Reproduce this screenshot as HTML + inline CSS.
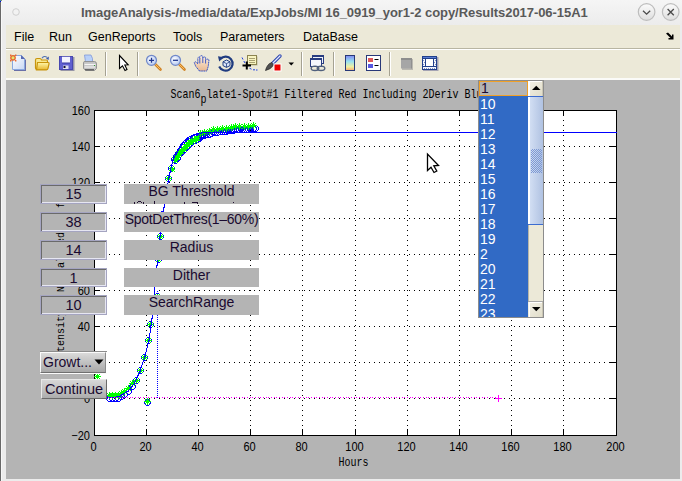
<!DOCTYPE html><html><head><meta charset="utf-8"><style>
html,body{margin:0;padding:0;width:682px;height:481px;overflow:hidden;background:#ececec;}
body{position:relative;font-family:"Liberation Sans",sans-serif;}
.abs{position:absolute;}
#lb{left:0;top:0;width:1px;height:481px;background:#686868;box-shadow:1px 0 0 #f8f8f8;}
#title{left:1px;top:0;width:681px;height:25px;background:linear-gradient(#f5f5f5,#ececec);}
#ttext{left:80px;top:5px;font-size:13px;letter-spacing:-0.055px;font-weight:bold;color:#595959;white-space:nowrap;}
#menu{left:6px;top:25px;width:674px;height:23px;background:#ece9d8;border-bottom:1px solid #b8b5a2;}
#menuw{left:6px;top:49px;width:674px;height:1px;background:#fff;}
.mi{position:absolute;top:5px;font-size:12.5px;color:#000;white-space:nowrap;}
#tool{left:6px;top:50px;width:674px;height:28px;background:#ece9d8;}
#toolw{left:6px;top:78px;width:674px;height:2px;background:#fbfbf8;}
#fig{left:6px;top:80px;width:674px;height:399px;background:#b4b4b4;}
.sep{position:absolute;top:52px;width:1px;height:24px;background:#a5a292;box-shadow:1px 0 0 #fff;}
.ed{position:absolute;box-sizing:border-box;width:67px;height:20px;border:1px solid #a4a4c0;box-shadow:inset 1px 1px 0 #6a6a6a,inset -1px -1px 0 #e6e6f2;text-align:center;font-size:14.5px;line-height:18px;color:#1a0a30;background:#b4b4b4;}
.lab{position:absolute;box-sizing:border-box;width:135px;height:20px;background:#b4b4b4;text-align:center;font-size:14px;line-height:15px;color:#1a0a30;overflow:hidden;white-space:nowrap;}
.tk{position:absolute;font-family:"Liberation Mono",monospace;font-size:10px;line-height:10px;color:#000;white-space:nowrap;transform-origin:0 0;}
.nm{position:absolute;font-family:"Liberation Sans",sans-serif;font-size:11px;line-height:10px;color:#000;white-space:nowrap;transform-origin:0 0;text-align:right;}
</style></head><body>
<div class="abs" id="title">
<svg class="abs" style="left:-1px;top:0" width="682" height="25">
<defs><linearGradient id="bg1" x1="0" y1="0" x2="0" y2="1"><stop offset="0" stop-color="#fbfbfb"/><stop offset="1" stop-color="#dedede"/></linearGradient></defs>
<circle cx="16" cy="12" r="3.3" fill="#f2f2f2" stroke="#d0d0d0" stroke-width="1"/>
<circle cx="646.6" cy="12" r="8.3" fill="url(#bg1)" stroke="#bdbdbd" stroke-width="1.2"/>
<circle cx="670.7" cy="12" r="8.3" fill="url(#bg1)" stroke="#bdbdbd" stroke-width="1.2"/>
<path d="M643 10.8 L646.6 14.2 L650.2 10.8" fill="none" stroke="#4a4a4a" stroke-width="1.3"/>
<path d="M667.6 9 L673.8 15.2 M673.8 9 L667.6 15.2" fill="none" stroke="#4a4a4a" stroke-width="1.3"/>
</svg>
<div class="abs" id="ttext">ImageAnalysis-/media/data/ExpJobs/MI 16_0919_yor1-2 copy/Results2017-06-15A1</div>
</div>
<div class="abs" id="lb"></div><div class="abs" style="left:0;top:0;width:1px;height:1px;background:#40a0a0"></div><div class="abs" style="left:0;top:1px;width:1px;height:1px;background:#0000e0"></div><div class="abs" style="left:1px;top:0;width:1px;height:1px;background:#808080"></div>
<div class="abs" id="menu">
<span class="mi" style="left:8px">File</span>
<span class="mi" style="left:43px">Run</span>
<span class="mi" style="left:82px">GenReports</span>
<span class="mi" style="left:167px">Tools</span>
<span class="mi" style="left:214px">Parameters</span>
<span class="mi" style="left:297px">DataBase</span>
<svg class="abs" style="left:659px;top:7px" width="10" height="9"><path d="M1 1.5 L3 0.5 L7 4.5 L7 2.5 L8.5 2.5 L8.5 7.5 L3.5 7.5 L3.5 6 L5.5 6 L1.5 2 Z" fill="#000"/></svg>
</div>
<div class="abs" id="menuw"></div>
<div class="abs" id="tool"></div>
<div class="abs" id="toolw"></div>
<div class="abs" id="fig"></div>

<div class="sep" style="left:105px"></div>
<div class="sep" style="left:137px"></div>
<div class="sep" style="left:301px"></div>
<div class="sep" style="left:333px"></div>
<div class="sep" style="left:389px"></div>
<svg class="abs" style="left:0;top:0" width="682" height="80">
<defs>
<linearGradient id="gdoc" x1="0" y1="0" x2="1" y2="1"><stop offset="0" stop-color="#ffffff"/><stop offset="1" stop-color="#c8d8f4"/></linearGradient>
<linearGradient id="gfold" x1="0" y1="0" x2="0" y2="1"><stop offset="0" stop-color="#fff6a8"/><stop offset="1" stop-color="#e8b830"/></linearGradient>
<linearGradient id="gcb" x1="0" y1="0" x2="0" y2="1"><stop offset="0" stop-color="#8088f0"/><stop offset="0.4" stop-color="#98e0f0"/><stop offset="0.75" stop-color="#f0f0a0"/><stop offset="1" stop-color="#f8a870"/></linearGradient>
<radialGradient id="glens" cx="0.4" cy="0.4" r="0.7"><stop offset="0" stop-color="#ffffff"/><stop offset="1" stop-color="#a8c0f0"/></radialGradient>
</defs>
<!-- new -->
<path d="M14 69 H26 V60 L24 58 V69 Z" fill="#6a70a8"/>
<rect x="14" y="69" width="12" height="2" fill="#6a70a8"/>
<path d="M12.5 55.5 H21.5 L24.5 58.5 V69.5 H12.5 Z" fill="url(#gdoc)" stroke="#88a8e0" stroke-width="1"/>
<path d="M21 55 L25 59 H21 Z" fill="#5868b0"/>
<circle cx="13" cy="57.8" r="2.2" fill="#e0e870" stroke="#e86a30" stroke-width="1.4"/>
<path d="M10 54.5h1.4v1.4h-1.4zM15 54.5h1.4v1.4h-1.4zM10 60h1.4v1.4h-1.4zM15 60h1.4v1.4h-1.4z" fill="#e86a30"/>
<!-- open -->
<path d="M35.5 60 Q35.5 58.5 37 58.5 H40 Q41 58.5 41.5 60 H46.5 Q47.5 60 47.5 61.5 V68 Q47.5 69.5 46 69.5 H37 Q35.5 69.5 35.5 68 Z" fill="#f8e890" stroke="#c8940c" stroke-width="1.2"/>
<path d="M37.5 62.5 H48.2 Q49.2 62.5 49 63.8 L48 68.5 Q47.8 69.8 46.5 69.8 H36.5 Z" fill="url(#gfold)" stroke="#c8940c" stroke-width="1.2"/>
<path d="M42 58.2 Q44 55.2 47.2 57.4" fill="none" stroke="#5070b0" stroke-width="1.1"/>
<path d="M46 58.6 L48.9 56.6 L48.6 60 Z" fill="#3858a8"/>
<!-- save -->
<rect x="60.5" y="57" width="14" height="14" fill="#505080" opacity="0.55"/>
<rect x="59" y="56" width="14" height="14" fill="#6060d0"/>
<rect x="59.5" y="56.5" width="13" height="13" fill="none" stroke="#4848b0" stroke-width="1"/>
<rect x="62" y="56.8" width="8" height="6.2" fill="#f4f4ff"/>
<rect x="62" y="62.5" width="8" height="1" fill="#3838a0"/>
<rect x="63" y="65.5" width="5.5" height="3.5" fill="#e0e0f0"/>
<rect x="63.5" y="66" width="2" height="2" fill="#101030"/>
<!-- print -->
<path d="M84.5 55 H91 L92.5 58.5 V62 H85.5 Z" fill="#b8d0f8" stroke="#8098d8" stroke-width="0.8"/>
<path d="M83.5 62.5 Q83.5 61.5 85 61.5 H94.5 Q96.5 61.5 96.5 64 V68.5 L94.5 70.5 H86 L83.5 68.5 Z" fill="#c4c4c4" stroke="#8c8c8c" stroke-width="0.9"/>
<path d="M84.5 64.5 H95.5" stroke="#f4f4f4" stroke-width="1.2"/>
<path d="M84.5 67 H95" stroke="#f8f8f8" stroke-width="1"/>
<path d="M85 69.8 H94" stroke="#505050" stroke-width="1.2"/>
<rect x="94" y="65" width="1" height="1" fill="#30a030"/>
<!-- arrow -->
<path d="M119.5 55.5 V68.5 L122.5 65.8 L125 70.5 L127 69.5 L124.8 65 L128.2 64.8 Z" fill="#fff" stroke="#000" stroke-width="1.1" stroke-linejoin="miter"/>
<!-- zoom in -->
<line x1="155.5" y1="64.5" x2="160.5" y2="69.5" stroke="#d08020" stroke-width="2.6" stroke-linecap="round"/>
<line x1="155.5" y1="64.5" x2="160" y2="69" stroke="#f8c060" stroke-width="1" stroke-linecap="round"/>
<circle cx="151.5" cy="60.3" r="5" fill="url(#glens)" stroke="#7088c8" stroke-width="1.2"/>
<path d="M149 60.3 H154 M151.5 57.8 V62.8" stroke="#203890" stroke-width="1.3"/>
<!-- zoom out -->
<line x1="179.5" y1="64.5" x2="184.5" y2="69.5" stroke="#d08020" stroke-width="2.6" stroke-linecap="round"/>
<line x1="179.5" y1="64.5" x2="184" y2="69" stroke="#f8c060" stroke-width="1" stroke-linecap="round"/>
<circle cx="175.5" cy="60.3" r="5" fill="url(#glens)" stroke="#7088c8" stroke-width="1.2"/>
<path d="M173 60.3 H178" stroke="#203890" stroke-width="1.3"/>
<!-- hand -->
<defs><linearGradient id="ghand" x1="0" y1="0" x2="0" y2="1"><stop offset="0" stop-color="#fdf0e0"/><stop offset="1" stop-color="#e8b890"/></linearGradient></defs>
<path d="M199.5 71 L195.8 66.5 L194.3 62.8 Q194.6 61.3 196 62 L197.8 63.8 V58.2 Q198 56.8 199.3 57.5 L199.8 58.3 V56.4 Q201.5 55 202.8 56.3 V58 Q204.3 56.3 205.6 57.4 V60 Q207.5 58.4 209 59.8 L208.2 66.5 L206.8 71 Z" fill="url(#ghand)" stroke="#3050c8" stroke-width="1" stroke-dasharray="1.6 0.6"/>
<path d="M199.8 58.3 V63.5 M202.8 58 V63 M205.6 60 V63.5" stroke="#3050c8" stroke-width="0.9"/>
<!-- rotate -->
<path d="M220.5 58.8 A7 7 0 1 1 219.2 66.5" fill="none" stroke="#203c80" stroke-width="2.2"/>
<path d="M218 56.2 L223.8 57.2 L219.2 61.6 Z" fill="#203c80"/>
<path d="M226.5 60 L230 61.8 V65.6 L226.5 67.4 L223 65.6 V61.8 Z" fill="#dce6f8" stroke="#203c80" stroke-width="1"/>
<path d="M223 61.8 L226.5 63.6 L230 61.8 M226.5 63.6 V67.4" fill="none" stroke="#203c80" stroke-width="0.8"/>
<!-- datacursor -->
<rect x="248.5" y="56.5" width="9" height="9" fill="#909060" opacity="0.5"/>
<rect x="247.5" y="55.5" width="9" height="9" fill="#f8f4c0" stroke="#8c8450" stroke-width="1"/>
<path d="M249 58.5 H255 M249 60.5 H255 M249 62.5 H255" stroke="#a8a070" stroke-width="1"/>
<path d="M242 57.5 L243 59.5 M243.8 61 L245 63" fill="none" stroke="#2040e0" stroke-width="1"/>
<path d="M249.5 68.2 L251.5 69.2 M253 69.8 H255 M256 70 H257.5" fill="none" stroke="#2040e0" stroke-width="1"/>
<path d="M242.5 65.5 H251 M246.8 61.5 V69.5" stroke="#000" stroke-width="2"/>
<!-- brush -->
<path d="M280 56 L272.5 63.5" stroke="#3048b0" stroke-width="3.4" stroke-linecap="round"/>
<path d="M280 56 L272.5 63.5" stroke="#e0e8ff" stroke-width="1.2" stroke-linecap="round"/>
<path d="M271.8 62.5 Q267 64 265.5 70.5 Q270.5 69.5 273.5 65.2 Z" fill="#505050" stroke="#282828" stroke-width="0.7"/>
<rect x="273.5" y="63.5" width="8" height="8" fill="#fff"/>
<rect x="274.5" y="64.5" width="6" height="6" fill="#ee0000"/>
<path d="M288.5 62.5 H294 L291.25 65.5 Z" fill="#000"/>
<!-- link -->
<rect x="312.5" y="55.5" width="11" height="8" fill="#eef2fa" stroke="#283c80" stroke-width="1"/>
<rect x="312" y="55" width="12" height="2" fill="#283c80"/>
<rect x="310.5" y="58.5" width="11" height="8" fill="#f4f6fc" stroke="#283c80" stroke-width="1"/>
<rect x="310" y="58" width="12" height="2" fill="#283c80"/>
<ellipse cx="315" cy="68.3" rx="3.8" ry="2.2" fill="none" stroke="#50607c" stroke-width="1.4"/>
<ellipse cx="321" cy="68.3" rx="3.8" ry="2.2" fill="none" stroke="#50607c" stroke-width="1.4"/>
<!-- colorbar -->
<rect x="345.5" y="55.5" width="9" height="15" fill="url(#gcb)" stroke="#283878" stroke-width="1"/>
<!-- legend -->
<rect x="366.5" y="55.5" width="14" height="15" fill="#fff" stroke="#283878" stroke-width="1"/>
<rect x="368" y="58" width="5" height="4" fill="#e05858"/>
<rect x="368" y="64" width="5" height="4" fill="#5858e0"/>
<path d="M374.5 59.5 H378.5 M374.5 65.5 H378.5" stroke="#000" stroke-width="1"/>
<!-- grey square -->
<rect x="402" y="59" width="11" height="11" fill="#8c8c8c" opacity="0.5"/>
<rect x="401" y="58" width="11" height="10.5" fill="#a6a6a6"/>
<rect x="401" y="58" width="11" height="2" fill="#8e8e8e"/>
<rect x="411" y="58" width="1" height="10.5" fill="#909090"/>
<!-- plot tools -->
<rect x="423" y="57" width="15.5" height="14" fill="#50508a" opacity="0.45"/>
<rect x="422" y="56" width="15" height="14" fill="#22408c"/>
<rect x="423" y="57" width="13" height="1" fill="#5a7cd0"/>
<rect x="426" y="59" width="7" height="7" fill="#fff"/>
<rect x="423" y="59" width="2" height="7" fill="#f4f6fc"/>
<rect x="434" y="59" width="2" height="7" fill="#f4f6fc"/>
<rect x="423" y="67" width="13" height="2" fill="#f4f6fc"/>
<path d="M423 60h1v1h-1zM424 62h1v1h-1zM423 64h1v1h-1zM435 60h1v1h-1zM434 62h1v1h-1zM435 64h1v1h-1zM424 68h1v1h-1zM426 68h1v1h-1zM428 68h1v1h-1zM430 68h1v1h-1zM432 68h1v1h-1zM434 68h1v1h-1z" fill="#8090c0"/>
</svg>

<svg class="abs" style="left:0;top:0" width="682" height="481">
<rect x="94" y="110" width="522" height="325" fill="#fff"/>
<path d="M146 115h1v1h-1zM146 120h1v1h-1zM146 125h1v1h-1zM146 130h1v1h-1zM146 135h1v1h-1zM146 140h1v1h-1zM146 145h1v1h-1zM146 150h1v1h-1zM146 155h1v1h-1zM146 160h1v1h-1zM146 165h1v1h-1zM146 170h1v1h-1zM146 175h1v1h-1zM146 180h1v1h-1zM146 185h1v1h-1zM146 190h1v1h-1zM146 195h1v1h-1zM146 200h1v1h-1zM146 205h1v1h-1zM146 210h1v1h-1zM146 215h1v1h-1zM146 220h1v1h-1zM146 225h1v1h-1zM146 230h1v1h-1zM146 235h1v1h-1zM146 240h1v1h-1zM146 245h1v1h-1zM146 250h1v1h-1zM146 255h1v1h-1zM146 260h1v1h-1zM146 265h1v1h-1zM146 270h1v1h-1zM146 275h1v1h-1zM146 280h1v1h-1zM146 285h1v1h-1zM146 290h1v1h-1zM146 295h1v1h-1zM146 300h1v1h-1zM146 305h1v1h-1zM146 310h1v1h-1zM146 315h1v1h-1zM146 320h1v1h-1zM146 325h1v1h-1zM146 330h1v1h-1zM146 335h1v1h-1zM146 340h1v1h-1zM146 345h1v1h-1zM146 350h1v1h-1zM146 355h1v1h-1zM146 360h1v1h-1zM146 365h1v1h-1zM146 370h1v1h-1zM146 375h1v1h-1zM146 380h1v1h-1zM146 385h1v1h-1zM146 390h1v1h-1zM146 395h1v1h-1zM146 400h1v1h-1zM146 405h1v1h-1zM146 410h1v1h-1zM146 415h1v1h-1zM146 420h1v1h-1zM146 425h1v1h-1zM146 430h1v1h-1z" fill="#000"/>
<path d="M198 115h1v1h-1zM198 120h1v1h-1zM198 125h1v1h-1zM198 130h1v1h-1zM198 135h1v1h-1zM198 140h1v1h-1zM198 145h1v1h-1zM198 150h1v1h-1zM198 155h1v1h-1zM198 160h1v1h-1zM198 165h1v1h-1zM198 170h1v1h-1zM198 175h1v1h-1zM198 180h1v1h-1zM198 185h1v1h-1zM198 190h1v1h-1zM198 195h1v1h-1zM198 200h1v1h-1zM198 205h1v1h-1zM198 210h1v1h-1zM198 215h1v1h-1zM198 220h1v1h-1zM198 225h1v1h-1zM198 230h1v1h-1zM198 235h1v1h-1zM198 240h1v1h-1zM198 245h1v1h-1zM198 250h1v1h-1zM198 255h1v1h-1zM198 260h1v1h-1zM198 265h1v1h-1zM198 270h1v1h-1zM198 275h1v1h-1zM198 280h1v1h-1zM198 285h1v1h-1zM198 290h1v1h-1zM198 295h1v1h-1zM198 300h1v1h-1zM198 305h1v1h-1zM198 310h1v1h-1zM198 315h1v1h-1zM198 320h1v1h-1zM198 325h1v1h-1zM198 330h1v1h-1zM198 335h1v1h-1zM198 340h1v1h-1zM198 345h1v1h-1zM198 350h1v1h-1zM198 355h1v1h-1zM198 360h1v1h-1zM198 365h1v1h-1zM198 370h1v1h-1zM198 375h1v1h-1zM198 380h1v1h-1zM198 385h1v1h-1zM198 390h1v1h-1zM198 395h1v1h-1zM198 400h1v1h-1zM198 405h1v1h-1zM198 410h1v1h-1zM198 415h1v1h-1zM198 420h1v1h-1zM198 425h1v1h-1zM198 430h1v1h-1z" fill="#000"/>
<path d="M250 115h1v1h-1zM250 120h1v1h-1zM250 125h1v1h-1zM250 130h1v1h-1zM250 135h1v1h-1zM250 140h1v1h-1zM250 145h1v1h-1zM250 150h1v1h-1zM250 155h1v1h-1zM250 160h1v1h-1zM250 165h1v1h-1zM250 170h1v1h-1zM250 175h1v1h-1zM250 180h1v1h-1zM250 185h1v1h-1zM250 190h1v1h-1zM250 195h1v1h-1zM250 200h1v1h-1zM250 205h1v1h-1zM250 210h1v1h-1zM250 215h1v1h-1zM250 220h1v1h-1zM250 225h1v1h-1zM250 230h1v1h-1zM250 235h1v1h-1zM250 240h1v1h-1zM250 245h1v1h-1zM250 250h1v1h-1zM250 255h1v1h-1zM250 260h1v1h-1zM250 265h1v1h-1zM250 270h1v1h-1zM250 275h1v1h-1zM250 280h1v1h-1zM250 285h1v1h-1zM250 290h1v1h-1zM250 295h1v1h-1zM250 300h1v1h-1zM250 305h1v1h-1zM250 310h1v1h-1zM250 315h1v1h-1zM250 320h1v1h-1zM250 325h1v1h-1zM250 330h1v1h-1zM250 335h1v1h-1zM250 340h1v1h-1zM250 345h1v1h-1zM250 350h1v1h-1zM250 355h1v1h-1zM250 360h1v1h-1zM250 365h1v1h-1zM250 370h1v1h-1zM250 375h1v1h-1zM250 380h1v1h-1zM250 385h1v1h-1zM250 390h1v1h-1zM250 395h1v1h-1zM250 400h1v1h-1zM250 405h1v1h-1zM250 410h1v1h-1zM250 415h1v1h-1zM250 420h1v1h-1zM250 425h1v1h-1zM250 430h1v1h-1z" fill="#000"/>
<path d="M302 115h1v1h-1zM302 120h1v1h-1zM302 125h1v1h-1zM302 130h1v1h-1zM302 135h1v1h-1zM302 140h1v1h-1zM302 145h1v1h-1zM302 150h1v1h-1zM302 155h1v1h-1zM302 160h1v1h-1zM302 165h1v1h-1zM302 170h1v1h-1zM302 175h1v1h-1zM302 180h1v1h-1zM302 185h1v1h-1zM302 190h1v1h-1zM302 195h1v1h-1zM302 200h1v1h-1zM302 205h1v1h-1zM302 210h1v1h-1zM302 215h1v1h-1zM302 220h1v1h-1zM302 225h1v1h-1zM302 230h1v1h-1zM302 235h1v1h-1zM302 240h1v1h-1zM302 245h1v1h-1zM302 250h1v1h-1zM302 255h1v1h-1zM302 260h1v1h-1zM302 265h1v1h-1zM302 270h1v1h-1zM302 275h1v1h-1zM302 280h1v1h-1zM302 285h1v1h-1zM302 290h1v1h-1zM302 295h1v1h-1zM302 300h1v1h-1zM302 305h1v1h-1zM302 310h1v1h-1zM302 315h1v1h-1zM302 320h1v1h-1zM302 325h1v1h-1zM302 330h1v1h-1zM302 335h1v1h-1zM302 340h1v1h-1zM302 345h1v1h-1zM302 350h1v1h-1zM302 355h1v1h-1zM302 360h1v1h-1zM302 365h1v1h-1zM302 370h1v1h-1zM302 375h1v1h-1zM302 380h1v1h-1zM302 385h1v1h-1zM302 390h1v1h-1zM302 395h1v1h-1zM302 400h1v1h-1zM302 405h1v1h-1zM302 410h1v1h-1zM302 415h1v1h-1zM302 420h1v1h-1zM302 425h1v1h-1zM302 430h1v1h-1z" fill="#000"/>
<path d="M355 115h1v1h-1zM355 120h1v1h-1zM355 125h1v1h-1zM355 130h1v1h-1zM355 135h1v1h-1zM355 140h1v1h-1zM355 145h1v1h-1zM355 150h1v1h-1zM355 155h1v1h-1zM355 160h1v1h-1zM355 165h1v1h-1zM355 170h1v1h-1zM355 175h1v1h-1zM355 180h1v1h-1zM355 185h1v1h-1zM355 190h1v1h-1zM355 195h1v1h-1zM355 200h1v1h-1zM355 205h1v1h-1zM355 210h1v1h-1zM355 215h1v1h-1zM355 220h1v1h-1zM355 225h1v1h-1zM355 230h1v1h-1zM355 235h1v1h-1zM355 240h1v1h-1zM355 245h1v1h-1zM355 250h1v1h-1zM355 255h1v1h-1zM355 260h1v1h-1zM355 265h1v1h-1zM355 270h1v1h-1zM355 275h1v1h-1zM355 280h1v1h-1zM355 285h1v1h-1zM355 290h1v1h-1zM355 295h1v1h-1zM355 300h1v1h-1zM355 305h1v1h-1zM355 310h1v1h-1zM355 315h1v1h-1zM355 320h1v1h-1zM355 325h1v1h-1zM355 330h1v1h-1zM355 335h1v1h-1zM355 340h1v1h-1zM355 345h1v1h-1zM355 350h1v1h-1zM355 355h1v1h-1zM355 360h1v1h-1zM355 365h1v1h-1zM355 370h1v1h-1zM355 375h1v1h-1zM355 380h1v1h-1zM355 385h1v1h-1zM355 390h1v1h-1zM355 395h1v1h-1zM355 400h1v1h-1zM355 405h1v1h-1zM355 410h1v1h-1zM355 415h1v1h-1zM355 420h1v1h-1zM355 425h1v1h-1zM355 430h1v1h-1z" fill="#000"/>
<path d="M407 115h1v1h-1zM407 120h1v1h-1zM407 125h1v1h-1zM407 130h1v1h-1zM407 135h1v1h-1zM407 140h1v1h-1zM407 145h1v1h-1zM407 150h1v1h-1zM407 155h1v1h-1zM407 160h1v1h-1zM407 165h1v1h-1zM407 170h1v1h-1zM407 175h1v1h-1zM407 180h1v1h-1zM407 185h1v1h-1zM407 190h1v1h-1zM407 195h1v1h-1zM407 200h1v1h-1zM407 205h1v1h-1zM407 210h1v1h-1zM407 215h1v1h-1zM407 220h1v1h-1zM407 225h1v1h-1zM407 230h1v1h-1zM407 235h1v1h-1zM407 240h1v1h-1zM407 245h1v1h-1zM407 250h1v1h-1zM407 255h1v1h-1zM407 260h1v1h-1zM407 265h1v1h-1zM407 270h1v1h-1zM407 275h1v1h-1zM407 280h1v1h-1zM407 285h1v1h-1zM407 290h1v1h-1zM407 295h1v1h-1zM407 300h1v1h-1zM407 305h1v1h-1zM407 310h1v1h-1zM407 315h1v1h-1zM407 320h1v1h-1zM407 325h1v1h-1zM407 330h1v1h-1zM407 335h1v1h-1zM407 340h1v1h-1zM407 345h1v1h-1zM407 350h1v1h-1zM407 355h1v1h-1zM407 360h1v1h-1zM407 365h1v1h-1zM407 370h1v1h-1zM407 375h1v1h-1zM407 380h1v1h-1zM407 385h1v1h-1zM407 390h1v1h-1zM407 395h1v1h-1zM407 400h1v1h-1zM407 405h1v1h-1zM407 410h1v1h-1zM407 415h1v1h-1zM407 420h1v1h-1zM407 425h1v1h-1zM407 430h1v1h-1z" fill="#000"/>
<path d="M459 115h1v1h-1zM459 120h1v1h-1zM459 125h1v1h-1zM459 130h1v1h-1zM459 135h1v1h-1zM459 140h1v1h-1zM459 145h1v1h-1zM459 150h1v1h-1zM459 155h1v1h-1zM459 160h1v1h-1zM459 165h1v1h-1zM459 170h1v1h-1zM459 175h1v1h-1zM459 180h1v1h-1zM459 185h1v1h-1zM459 190h1v1h-1zM459 195h1v1h-1zM459 200h1v1h-1zM459 205h1v1h-1zM459 210h1v1h-1zM459 215h1v1h-1zM459 220h1v1h-1zM459 225h1v1h-1zM459 230h1v1h-1zM459 235h1v1h-1zM459 240h1v1h-1zM459 245h1v1h-1zM459 250h1v1h-1zM459 255h1v1h-1zM459 260h1v1h-1zM459 265h1v1h-1zM459 270h1v1h-1zM459 275h1v1h-1zM459 280h1v1h-1zM459 285h1v1h-1zM459 290h1v1h-1zM459 295h1v1h-1zM459 300h1v1h-1zM459 305h1v1h-1zM459 310h1v1h-1zM459 315h1v1h-1zM459 320h1v1h-1zM459 325h1v1h-1zM459 330h1v1h-1zM459 335h1v1h-1zM459 340h1v1h-1zM459 345h1v1h-1zM459 350h1v1h-1zM459 355h1v1h-1zM459 360h1v1h-1zM459 365h1v1h-1zM459 370h1v1h-1zM459 375h1v1h-1zM459 380h1v1h-1zM459 385h1v1h-1zM459 390h1v1h-1zM459 395h1v1h-1zM459 400h1v1h-1zM459 405h1v1h-1zM459 410h1v1h-1zM459 415h1v1h-1zM459 420h1v1h-1zM459 425h1v1h-1zM459 430h1v1h-1z" fill="#000"/>
<path d="M511 115h1v1h-1zM511 120h1v1h-1zM511 125h1v1h-1zM511 130h1v1h-1zM511 135h1v1h-1zM511 140h1v1h-1zM511 145h1v1h-1zM511 150h1v1h-1zM511 155h1v1h-1zM511 160h1v1h-1zM511 165h1v1h-1zM511 170h1v1h-1zM511 175h1v1h-1zM511 180h1v1h-1zM511 185h1v1h-1zM511 190h1v1h-1zM511 195h1v1h-1zM511 200h1v1h-1zM511 205h1v1h-1zM511 210h1v1h-1zM511 215h1v1h-1zM511 220h1v1h-1zM511 225h1v1h-1zM511 230h1v1h-1zM511 235h1v1h-1zM511 240h1v1h-1zM511 245h1v1h-1zM511 250h1v1h-1zM511 255h1v1h-1zM511 260h1v1h-1zM511 265h1v1h-1zM511 270h1v1h-1zM511 275h1v1h-1zM511 280h1v1h-1zM511 285h1v1h-1zM511 290h1v1h-1zM511 295h1v1h-1zM511 300h1v1h-1zM511 305h1v1h-1zM511 310h1v1h-1zM511 315h1v1h-1zM511 320h1v1h-1zM511 325h1v1h-1zM511 330h1v1h-1zM511 335h1v1h-1zM511 340h1v1h-1zM511 345h1v1h-1zM511 350h1v1h-1zM511 355h1v1h-1zM511 360h1v1h-1zM511 365h1v1h-1zM511 370h1v1h-1zM511 375h1v1h-1zM511 380h1v1h-1zM511 385h1v1h-1zM511 390h1v1h-1zM511 395h1v1h-1zM511 400h1v1h-1zM511 405h1v1h-1zM511 410h1v1h-1zM511 415h1v1h-1zM511 420h1v1h-1zM511 425h1v1h-1zM511 430h1v1h-1z" fill="#000"/>
<path d="M563 115h1v1h-1zM563 120h1v1h-1zM563 125h1v1h-1zM563 130h1v1h-1zM563 135h1v1h-1zM563 140h1v1h-1zM563 145h1v1h-1zM563 150h1v1h-1zM563 155h1v1h-1zM563 160h1v1h-1zM563 165h1v1h-1zM563 170h1v1h-1zM563 175h1v1h-1zM563 180h1v1h-1zM563 185h1v1h-1zM563 190h1v1h-1zM563 195h1v1h-1zM563 200h1v1h-1zM563 205h1v1h-1zM563 210h1v1h-1zM563 215h1v1h-1zM563 220h1v1h-1zM563 225h1v1h-1zM563 230h1v1h-1zM563 235h1v1h-1zM563 240h1v1h-1zM563 245h1v1h-1zM563 250h1v1h-1zM563 255h1v1h-1zM563 260h1v1h-1zM563 265h1v1h-1zM563 270h1v1h-1zM563 275h1v1h-1zM563 280h1v1h-1zM563 285h1v1h-1zM563 290h1v1h-1zM563 295h1v1h-1zM563 300h1v1h-1zM563 305h1v1h-1zM563 310h1v1h-1zM563 315h1v1h-1zM563 320h1v1h-1zM563 325h1v1h-1zM563 330h1v1h-1zM563 335h1v1h-1zM563 340h1v1h-1zM563 345h1v1h-1zM563 350h1v1h-1zM563 355h1v1h-1zM563 360h1v1h-1zM563 365h1v1h-1zM563 370h1v1h-1zM563 375h1v1h-1zM563 380h1v1h-1zM563 385h1v1h-1zM563 390h1v1h-1zM563 395h1v1h-1zM563 400h1v1h-1zM563 405h1v1h-1zM563 410h1v1h-1zM563 415h1v1h-1zM563 420h1v1h-1zM563 425h1v1h-1zM563 430h1v1h-1z" fill="#000"/>
<path d="M94 398h1v1h-1zM99 398h1v1h-1zM104 398h1v1h-1zM109 398h1v1h-1zM114 398h1v1h-1zM119 398h1v1h-1zM124 398h1v1h-1zM129 398h1v1h-1zM134 398h1v1h-1zM139 398h1v1h-1zM144 398h1v1h-1zM149 398h1v1h-1zM154 398h1v1h-1zM159 398h1v1h-1zM164 398h1v1h-1zM169 398h1v1h-1zM174 398h1v1h-1zM179 398h1v1h-1zM184 398h1v1h-1zM189 398h1v1h-1zM194 398h1v1h-1zM199 398h1v1h-1zM204 398h1v1h-1zM209 398h1v1h-1zM214 398h1v1h-1zM219 398h1v1h-1zM224 398h1v1h-1zM229 398h1v1h-1zM234 398h1v1h-1zM239 398h1v1h-1zM244 398h1v1h-1zM249 398h1v1h-1zM254 398h1v1h-1zM259 398h1v1h-1zM264 398h1v1h-1zM269 398h1v1h-1zM274 398h1v1h-1zM279 398h1v1h-1zM284 398h1v1h-1zM289 398h1v1h-1zM294 398h1v1h-1zM299 398h1v1h-1zM304 398h1v1h-1zM309 398h1v1h-1zM314 398h1v1h-1zM319 398h1v1h-1zM324 398h1v1h-1zM329 398h1v1h-1zM334 398h1v1h-1zM339 398h1v1h-1zM344 398h1v1h-1zM349 398h1v1h-1zM354 398h1v1h-1zM359 398h1v1h-1zM364 398h1v1h-1zM369 398h1v1h-1zM374 398h1v1h-1zM379 398h1v1h-1zM384 398h1v1h-1zM389 398h1v1h-1zM394 398h1v1h-1zM399 398h1v1h-1zM404 398h1v1h-1zM409 398h1v1h-1zM414 398h1v1h-1zM419 398h1v1h-1zM424 398h1v1h-1zM429 398h1v1h-1zM434 398h1v1h-1zM439 398h1v1h-1zM444 398h1v1h-1zM449 398h1v1h-1zM454 398h1v1h-1zM459 398h1v1h-1zM464 398h1v1h-1zM469 398h1v1h-1zM474 398h1v1h-1zM479 398h1v1h-1zM484 398h1v1h-1zM489 398h1v1h-1zM494 398h1v1h-1zM499 398h1v1h-1zM504 398h1v1h-1zM509 398h1v1h-1zM514 398h1v1h-1zM519 398h1v1h-1zM524 398h1v1h-1zM529 398h1v1h-1zM534 398h1v1h-1zM539 398h1v1h-1zM544 398h1v1h-1zM549 398h1v1h-1zM554 398h1v1h-1zM559 398h1v1h-1zM564 398h1v1h-1zM569 398h1v1h-1zM574 398h1v1h-1zM579 398h1v1h-1zM584 398h1v1h-1zM589 398h1v1h-1zM594 398h1v1h-1zM599 398h1v1h-1zM604 398h1v1h-1zM609 398h1v1h-1zM614 398h1v1h-1z" fill="#000"/>
<path d="M94 362h1v1h-1zM99 362h1v1h-1zM104 362h1v1h-1zM109 362h1v1h-1zM114 362h1v1h-1zM119 362h1v1h-1zM124 362h1v1h-1zM129 362h1v1h-1zM134 362h1v1h-1zM139 362h1v1h-1zM144 362h1v1h-1zM149 362h1v1h-1zM154 362h1v1h-1zM159 362h1v1h-1zM164 362h1v1h-1zM169 362h1v1h-1zM174 362h1v1h-1zM179 362h1v1h-1zM184 362h1v1h-1zM189 362h1v1h-1zM194 362h1v1h-1zM199 362h1v1h-1zM204 362h1v1h-1zM209 362h1v1h-1zM214 362h1v1h-1zM219 362h1v1h-1zM224 362h1v1h-1zM229 362h1v1h-1zM234 362h1v1h-1zM239 362h1v1h-1zM244 362h1v1h-1zM249 362h1v1h-1zM254 362h1v1h-1zM259 362h1v1h-1zM264 362h1v1h-1zM269 362h1v1h-1zM274 362h1v1h-1zM279 362h1v1h-1zM284 362h1v1h-1zM289 362h1v1h-1zM294 362h1v1h-1zM299 362h1v1h-1zM304 362h1v1h-1zM309 362h1v1h-1zM314 362h1v1h-1zM319 362h1v1h-1zM324 362h1v1h-1zM329 362h1v1h-1zM334 362h1v1h-1zM339 362h1v1h-1zM344 362h1v1h-1zM349 362h1v1h-1zM354 362h1v1h-1zM359 362h1v1h-1zM364 362h1v1h-1zM369 362h1v1h-1zM374 362h1v1h-1zM379 362h1v1h-1zM384 362h1v1h-1zM389 362h1v1h-1zM394 362h1v1h-1zM399 362h1v1h-1zM404 362h1v1h-1zM409 362h1v1h-1zM414 362h1v1h-1zM419 362h1v1h-1zM424 362h1v1h-1zM429 362h1v1h-1zM434 362h1v1h-1zM439 362h1v1h-1zM444 362h1v1h-1zM449 362h1v1h-1zM454 362h1v1h-1zM459 362h1v1h-1zM464 362h1v1h-1zM469 362h1v1h-1zM474 362h1v1h-1zM479 362h1v1h-1zM484 362h1v1h-1zM489 362h1v1h-1zM494 362h1v1h-1zM499 362h1v1h-1zM504 362h1v1h-1zM509 362h1v1h-1zM514 362h1v1h-1zM519 362h1v1h-1zM524 362h1v1h-1zM529 362h1v1h-1zM534 362h1v1h-1zM539 362h1v1h-1zM544 362h1v1h-1zM549 362h1v1h-1zM554 362h1v1h-1zM559 362h1v1h-1zM564 362h1v1h-1zM569 362h1v1h-1zM574 362h1v1h-1zM579 362h1v1h-1zM584 362h1v1h-1zM589 362h1v1h-1zM594 362h1v1h-1zM599 362h1v1h-1zM604 362h1v1h-1zM609 362h1v1h-1zM614 362h1v1h-1z" fill="#000"/>
<path d="M94 326h1v1h-1zM99 326h1v1h-1zM104 326h1v1h-1zM109 326h1v1h-1zM114 326h1v1h-1zM119 326h1v1h-1zM124 326h1v1h-1zM129 326h1v1h-1zM134 326h1v1h-1zM139 326h1v1h-1zM144 326h1v1h-1zM149 326h1v1h-1zM154 326h1v1h-1zM159 326h1v1h-1zM164 326h1v1h-1zM169 326h1v1h-1zM174 326h1v1h-1zM179 326h1v1h-1zM184 326h1v1h-1zM189 326h1v1h-1zM194 326h1v1h-1zM199 326h1v1h-1zM204 326h1v1h-1zM209 326h1v1h-1zM214 326h1v1h-1zM219 326h1v1h-1zM224 326h1v1h-1zM229 326h1v1h-1zM234 326h1v1h-1zM239 326h1v1h-1zM244 326h1v1h-1zM249 326h1v1h-1zM254 326h1v1h-1zM259 326h1v1h-1zM264 326h1v1h-1zM269 326h1v1h-1zM274 326h1v1h-1zM279 326h1v1h-1zM284 326h1v1h-1zM289 326h1v1h-1zM294 326h1v1h-1zM299 326h1v1h-1zM304 326h1v1h-1zM309 326h1v1h-1zM314 326h1v1h-1zM319 326h1v1h-1zM324 326h1v1h-1zM329 326h1v1h-1zM334 326h1v1h-1zM339 326h1v1h-1zM344 326h1v1h-1zM349 326h1v1h-1zM354 326h1v1h-1zM359 326h1v1h-1zM364 326h1v1h-1zM369 326h1v1h-1zM374 326h1v1h-1zM379 326h1v1h-1zM384 326h1v1h-1zM389 326h1v1h-1zM394 326h1v1h-1zM399 326h1v1h-1zM404 326h1v1h-1zM409 326h1v1h-1zM414 326h1v1h-1zM419 326h1v1h-1zM424 326h1v1h-1zM429 326h1v1h-1zM434 326h1v1h-1zM439 326h1v1h-1zM444 326h1v1h-1zM449 326h1v1h-1zM454 326h1v1h-1zM459 326h1v1h-1zM464 326h1v1h-1zM469 326h1v1h-1zM474 326h1v1h-1zM479 326h1v1h-1zM484 326h1v1h-1zM489 326h1v1h-1zM494 326h1v1h-1zM499 326h1v1h-1zM504 326h1v1h-1zM509 326h1v1h-1zM514 326h1v1h-1zM519 326h1v1h-1zM524 326h1v1h-1zM529 326h1v1h-1zM534 326h1v1h-1zM539 326h1v1h-1zM544 326h1v1h-1zM549 326h1v1h-1zM554 326h1v1h-1zM559 326h1v1h-1zM564 326h1v1h-1zM569 326h1v1h-1zM574 326h1v1h-1zM579 326h1v1h-1zM584 326h1v1h-1zM589 326h1v1h-1zM594 326h1v1h-1zM599 326h1v1h-1zM604 326h1v1h-1zM609 326h1v1h-1zM614 326h1v1h-1z" fill="#000"/>
<path d="M94 290h1v1h-1zM99 290h1v1h-1zM104 290h1v1h-1zM109 290h1v1h-1zM114 290h1v1h-1zM119 290h1v1h-1zM124 290h1v1h-1zM129 290h1v1h-1zM134 290h1v1h-1zM139 290h1v1h-1zM144 290h1v1h-1zM149 290h1v1h-1zM154 290h1v1h-1zM159 290h1v1h-1zM164 290h1v1h-1zM169 290h1v1h-1zM174 290h1v1h-1zM179 290h1v1h-1zM184 290h1v1h-1zM189 290h1v1h-1zM194 290h1v1h-1zM199 290h1v1h-1zM204 290h1v1h-1zM209 290h1v1h-1zM214 290h1v1h-1zM219 290h1v1h-1zM224 290h1v1h-1zM229 290h1v1h-1zM234 290h1v1h-1zM239 290h1v1h-1zM244 290h1v1h-1zM249 290h1v1h-1zM254 290h1v1h-1zM259 290h1v1h-1zM264 290h1v1h-1zM269 290h1v1h-1zM274 290h1v1h-1zM279 290h1v1h-1zM284 290h1v1h-1zM289 290h1v1h-1zM294 290h1v1h-1zM299 290h1v1h-1zM304 290h1v1h-1zM309 290h1v1h-1zM314 290h1v1h-1zM319 290h1v1h-1zM324 290h1v1h-1zM329 290h1v1h-1zM334 290h1v1h-1zM339 290h1v1h-1zM344 290h1v1h-1zM349 290h1v1h-1zM354 290h1v1h-1zM359 290h1v1h-1zM364 290h1v1h-1zM369 290h1v1h-1zM374 290h1v1h-1zM379 290h1v1h-1zM384 290h1v1h-1zM389 290h1v1h-1zM394 290h1v1h-1zM399 290h1v1h-1zM404 290h1v1h-1zM409 290h1v1h-1zM414 290h1v1h-1zM419 290h1v1h-1zM424 290h1v1h-1zM429 290h1v1h-1zM434 290h1v1h-1zM439 290h1v1h-1zM444 290h1v1h-1zM449 290h1v1h-1zM454 290h1v1h-1zM459 290h1v1h-1zM464 290h1v1h-1zM469 290h1v1h-1zM474 290h1v1h-1zM479 290h1v1h-1zM484 290h1v1h-1zM489 290h1v1h-1zM494 290h1v1h-1zM499 290h1v1h-1zM504 290h1v1h-1zM509 290h1v1h-1zM514 290h1v1h-1zM519 290h1v1h-1zM524 290h1v1h-1zM529 290h1v1h-1zM534 290h1v1h-1zM539 290h1v1h-1zM544 290h1v1h-1zM549 290h1v1h-1zM554 290h1v1h-1zM559 290h1v1h-1zM564 290h1v1h-1zM569 290h1v1h-1zM574 290h1v1h-1zM579 290h1v1h-1zM584 290h1v1h-1zM589 290h1v1h-1zM594 290h1v1h-1zM599 290h1v1h-1zM604 290h1v1h-1zM609 290h1v1h-1zM614 290h1v1h-1z" fill="#000"/>
<path d="M94 254h1v1h-1zM99 254h1v1h-1zM104 254h1v1h-1zM109 254h1v1h-1zM114 254h1v1h-1zM119 254h1v1h-1zM124 254h1v1h-1zM129 254h1v1h-1zM134 254h1v1h-1zM139 254h1v1h-1zM144 254h1v1h-1zM149 254h1v1h-1zM154 254h1v1h-1zM159 254h1v1h-1zM164 254h1v1h-1zM169 254h1v1h-1zM174 254h1v1h-1zM179 254h1v1h-1zM184 254h1v1h-1zM189 254h1v1h-1zM194 254h1v1h-1zM199 254h1v1h-1zM204 254h1v1h-1zM209 254h1v1h-1zM214 254h1v1h-1zM219 254h1v1h-1zM224 254h1v1h-1zM229 254h1v1h-1zM234 254h1v1h-1zM239 254h1v1h-1zM244 254h1v1h-1zM249 254h1v1h-1zM254 254h1v1h-1zM259 254h1v1h-1zM264 254h1v1h-1zM269 254h1v1h-1zM274 254h1v1h-1zM279 254h1v1h-1zM284 254h1v1h-1zM289 254h1v1h-1zM294 254h1v1h-1zM299 254h1v1h-1zM304 254h1v1h-1zM309 254h1v1h-1zM314 254h1v1h-1zM319 254h1v1h-1zM324 254h1v1h-1zM329 254h1v1h-1zM334 254h1v1h-1zM339 254h1v1h-1zM344 254h1v1h-1zM349 254h1v1h-1zM354 254h1v1h-1zM359 254h1v1h-1zM364 254h1v1h-1zM369 254h1v1h-1zM374 254h1v1h-1zM379 254h1v1h-1zM384 254h1v1h-1zM389 254h1v1h-1zM394 254h1v1h-1zM399 254h1v1h-1zM404 254h1v1h-1zM409 254h1v1h-1zM414 254h1v1h-1zM419 254h1v1h-1zM424 254h1v1h-1zM429 254h1v1h-1zM434 254h1v1h-1zM439 254h1v1h-1zM444 254h1v1h-1zM449 254h1v1h-1zM454 254h1v1h-1zM459 254h1v1h-1zM464 254h1v1h-1zM469 254h1v1h-1zM474 254h1v1h-1zM479 254h1v1h-1zM484 254h1v1h-1zM489 254h1v1h-1zM494 254h1v1h-1zM499 254h1v1h-1zM504 254h1v1h-1zM509 254h1v1h-1zM514 254h1v1h-1zM519 254h1v1h-1zM524 254h1v1h-1zM529 254h1v1h-1zM534 254h1v1h-1zM539 254h1v1h-1zM544 254h1v1h-1zM549 254h1v1h-1zM554 254h1v1h-1zM559 254h1v1h-1zM564 254h1v1h-1zM569 254h1v1h-1zM574 254h1v1h-1zM579 254h1v1h-1zM584 254h1v1h-1zM589 254h1v1h-1zM594 254h1v1h-1zM599 254h1v1h-1zM604 254h1v1h-1zM609 254h1v1h-1zM614 254h1v1h-1z" fill="#000"/>
<path d="M94 218h1v1h-1zM99 218h1v1h-1zM104 218h1v1h-1zM109 218h1v1h-1zM114 218h1v1h-1zM119 218h1v1h-1zM124 218h1v1h-1zM129 218h1v1h-1zM134 218h1v1h-1zM139 218h1v1h-1zM144 218h1v1h-1zM149 218h1v1h-1zM154 218h1v1h-1zM159 218h1v1h-1zM164 218h1v1h-1zM169 218h1v1h-1zM174 218h1v1h-1zM179 218h1v1h-1zM184 218h1v1h-1zM189 218h1v1h-1zM194 218h1v1h-1zM199 218h1v1h-1zM204 218h1v1h-1zM209 218h1v1h-1zM214 218h1v1h-1zM219 218h1v1h-1zM224 218h1v1h-1zM229 218h1v1h-1zM234 218h1v1h-1zM239 218h1v1h-1zM244 218h1v1h-1zM249 218h1v1h-1zM254 218h1v1h-1zM259 218h1v1h-1zM264 218h1v1h-1zM269 218h1v1h-1zM274 218h1v1h-1zM279 218h1v1h-1zM284 218h1v1h-1zM289 218h1v1h-1zM294 218h1v1h-1zM299 218h1v1h-1zM304 218h1v1h-1zM309 218h1v1h-1zM314 218h1v1h-1zM319 218h1v1h-1zM324 218h1v1h-1zM329 218h1v1h-1zM334 218h1v1h-1zM339 218h1v1h-1zM344 218h1v1h-1zM349 218h1v1h-1zM354 218h1v1h-1zM359 218h1v1h-1zM364 218h1v1h-1zM369 218h1v1h-1zM374 218h1v1h-1zM379 218h1v1h-1zM384 218h1v1h-1zM389 218h1v1h-1zM394 218h1v1h-1zM399 218h1v1h-1zM404 218h1v1h-1zM409 218h1v1h-1zM414 218h1v1h-1zM419 218h1v1h-1zM424 218h1v1h-1zM429 218h1v1h-1zM434 218h1v1h-1zM439 218h1v1h-1zM444 218h1v1h-1zM449 218h1v1h-1zM454 218h1v1h-1zM459 218h1v1h-1zM464 218h1v1h-1zM469 218h1v1h-1zM474 218h1v1h-1zM479 218h1v1h-1zM484 218h1v1h-1zM489 218h1v1h-1zM494 218h1v1h-1zM499 218h1v1h-1zM504 218h1v1h-1zM509 218h1v1h-1zM514 218h1v1h-1zM519 218h1v1h-1zM524 218h1v1h-1zM529 218h1v1h-1zM534 218h1v1h-1zM539 218h1v1h-1zM544 218h1v1h-1zM549 218h1v1h-1zM554 218h1v1h-1zM559 218h1v1h-1zM564 218h1v1h-1zM569 218h1v1h-1zM574 218h1v1h-1zM579 218h1v1h-1zM584 218h1v1h-1zM589 218h1v1h-1zM594 218h1v1h-1zM599 218h1v1h-1zM604 218h1v1h-1zM609 218h1v1h-1zM614 218h1v1h-1z" fill="#000"/>
<path d="M94 182h1v1h-1zM99 182h1v1h-1zM104 182h1v1h-1zM109 182h1v1h-1zM114 182h1v1h-1zM119 182h1v1h-1zM124 182h1v1h-1zM129 182h1v1h-1zM134 182h1v1h-1zM139 182h1v1h-1zM144 182h1v1h-1zM149 182h1v1h-1zM154 182h1v1h-1zM159 182h1v1h-1zM164 182h1v1h-1zM169 182h1v1h-1zM174 182h1v1h-1zM179 182h1v1h-1zM184 182h1v1h-1zM189 182h1v1h-1zM194 182h1v1h-1zM199 182h1v1h-1zM204 182h1v1h-1zM209 182h1v1h-1zM214 182h1v1h-1zM219 182h1v1h-1zM224 182h1v1h-1zM229 182h1v1h-1zM234 182h1v1h-1zM239 182h1v1h-1zM244 182h1v1h-1zM249 182h1v1h-1zM254 182h1v1h-1zM259 182h1v1h-1zM264 182h1v1h-1zM269 182h1v1h-1zM274 182h1v1h-1zM279 182h1v1h-1zM284 182h1v1h-1zM289 182h1v1h-1zM294 182h1v1h-1zM299 182h1v1h-1zM304 182h1v1h-1zM309 182h1v1h-1zM314 182h1v1h-1zM319 182h1v1h-1zM324 182h1v1h-1zM329 182h1v1h-1zM334 182h1v1h-1zM339 182h1v1h-1zM344 182h1v1h-1zM349 182h1v1h-1zM354 182h1v1h-1zM359 182h1v1h-1zM364 182h1v1h-1zM369 182h1v1h-1zM374 182h1v1h-1zM379 182h1v1h-1zM384 182h1v1h-1zM389 182h1v1h-1zM394 182h1v1h-1zM399 182h1v1h-1zM404 182h1v1h-1zM409 182h1v1h-1zM414 182h1v1h-1zM419 182h1v1h-1zM424 182h1v1h-1zM429 182h1v1h-1zM434 182h1v1h-1zM439 182h1v1h-1zM444 182h1v1h-1zM449 182h1v1h-1zM454 182h1v1h-1zM459 182h1v1h-1zM464 182h1v1h-1zM469 182h1v1h-1zM474 182h1v1h-1zM479 182h1v1h-1zM484 182h1v1h-1zM489 182h1v1h-1zM494 182h1v1h-1zM499 182h1v1h-1zM504 182h1v1h-1zM509 182h1v1h-1zM514 182h1v1h-1zM519 182h1v1h-1zM524 182h1v1h-1zM529 182h1v1h-1zM534 182h1v1h-1zM539 182h1v1h-1zM544 182h1v1h-1zM549 182h1v1h-1zM554 182h1v1h-1zM559 182h1v1h-1zM564 182h1v1h-1zM569 182h1v1h-1zM574 182h1v1h-1zM579 182h1v1h-1zM584 182h1v1h-1zM589 182h1v1h-1zM594 182h1v1h-1zM599 182h1v1h-1zM604 182h1v1h-1zM609 182h1v1h-1zM614 182h1v1h-1z" fill="#000"/>
<path d="M94 146h1v1h-1zM99 146h1v1h-1zM104 146h1v1h-1zM109 146h1v1h-1zM114 146h1v1h-1zM119 146h1v1h-1zM124 146h1v1h-1zM129 146h1v1h-1zM134 146h1v1h-1zM139 146h1v1h-1zM144 146h1v1h-1zM149 146h1v1h-1zM154 146h1v1h-1zM159 146h1v1h-1zM164 146h1v1h-1zM169 146h1v1h-1zM174 146h1v1h-1zM179 146h1v1h-1zM184 146h1v1h-1zM189 146h1v1h-1zM194 146h1v1h-1zM199 146h1v1h-1zM204 146h1v1h-1zM209 146h1v1h-1zM214 146h1v1h-1zM219 146h1v1h-1zM224 146h1v1h-1zM229 146h1v1h-1zM234 146h1v1h-1zM239 146h1v1h-1zM244 146h1v1h-1zM249 146h1v1h-1zM254 146h1v1h-1zM259 146h1v1h-1zM264 146h1v1h-1zM269 146h1v1h-1zM274 146h1v1h-1zM279 146h1v1h-1zM284 146h1v1h-1zM289 146h1v1h-1zM294 146h1v1h-1zM299 146h1v1h-1zM304 146h1v1h-1zM309 146h1v1h-1zM314 146h1v1h-1zM319 146h1v1h-1zM324 146h1v1h-1zM329 146h1v1h-1zM334 146h1v1h-1zM339 146h1v1h-1zM344 146h1v1h-1zM349 146h1v1h-1zM354 146h1v1h-1zM359 146h1v1h-1zM364 146h1v1h-1zM369 146h1v1h-1zM374 146h1v1h-1zM379 146h1v1h-1zM384 146h1v1h-1zM389 146h1v1h-1zM394 146h1v1h-1zM399 146h1v1h-1zM404 146h1v1h-1zM409 146h1v1h-1zM414 146h1v1h-1zM419 146h1v1h-1zM424 146h1v1h-1zM429 146h1v1h-1zM434 146h1v1h-1zM439 146h1v1h-1zM444 146h1v1h-1zM449 146h1v1h-1zM454 146h1v1h-1zM459 146h1v1h-1zM464 146h1v1h-1zM469 146h1v1h-1zM474 146h1v1h-1zM479 146h1v1h-1zM484 146h1v1h-1zM489 146h1v1h-1zM494 146h1v1h-1zM499 146h1v1h-1zM504 146h1v1h-1zM509 146h1v1h-1zM514 146h1v1h-1zM519 146h1v1h-1zM524 146h1v1h-1zM529 146h1v1h-1zM534 146h1v1h-1zM539 146h1v1h-1zM544 146h1v1h-1zM549 146h1v1h-1zM554 146h1v1h-1zM559 146h1v1h-1zM564 146h1v1h-1zM569 146h1v1h-1zM574 146h1v1h-1zM579 146h1v1h-1zM584 146h1v1h-1zM589 146h1v1h-1zM594 146h1v1h-1zM599 146h1v1h-1zM604 146h1v1h-1zM609 146h1v1h-1zM614 146h1v1h-1z" fill="#000"/>
<path d="M94 435h1v-6h-1z M94 110h1v6h-1z M146 435h1v-6h-1z M146 110h1v6h-1z M198 435h1v-6h-1z M198 110h1v6h-1z M250 435h1v-6h-1z M250 110h1v6h-1z M302 435h1v-6h-1z M302 110h1v6h-1z M355 435h1v-6h-1z M355 110h1v6h-1z M407 435h1v-6h-1z M407 110h1v6h-1z M459 435h1v-6h-1z M459 110h1v6h-1z M511 435h1v-6h-1z M511 110h1v6h-1z M563 435h1v-6h-1z M563 110h1v6h-1z M616 435h1v-6h-1z M616 110h1v6h-1z M94 435h6v1h-6z M616 435h-6v1h6z M94 398h6v1h-6z M616 398h-6v1h6z M94 362h6v1h-6z M616 362h-6v1h6z M94 326h6v1h-6z M616 326h-6v1h6z M94 290h6v1h-6z M616 290h-6v1h6z M94 254h6v1h-6z M616 254h-6v1h6z M94 218h6v1h-6z M616 218h-6v1h6z M94 182h6v1h-6z M616 182h-6v1h6z M94 146h6v1h-6z M616 146h-6v1h6z M94 110h6v1h-6z M616 110h-6v1h6z " fill="#000"/>
<rect x="94.5" y="110.5" width="522" height="325" fill="none" stroke="#000" stroke-width="1"/>
<path d="M157 291h1v1h-1zM157 293h1v1h-1zM157 295h1v1h-1zM157 297h1v1h-1zM157 299h1v1h-1zM157 301h1v1h-1zM157 303h1v1h-1zM157 305h1v1h-1zM157 307h1v1h-1zM157 309h1v1h-1zM157 311h1v1h-1zM157 313h1v1h-1zM157 315h1v1h-1zM157 317h1v1h-1zM157 319h1v1h-1zM157 321h1v1h-1zM157 323h1v1h-1zM157 325h1v1h-1zM157 327h1v1h-1zM157 329h1v1h-1zM157 331h1v1h-1zM157 333h1v1h-1zM157 335h1v1h-1zM157 337h1v1h-1zM157 339h1v1h-1zM157 341h1v1h-1zM157 343h1v1h-1zM157 345h1v1h-1zM157 347h1v1h-1zM157 349h1v1h-1zM157 351h1v1h-1zM157 353h1v1h-1zM157 355h1v1h-1zM157 357h1v1h-1zM157 359h1v1h-1zM157 361h1v1h-1zM157 363h1v1h-1zM157 365h1v1h-1zM157 367h1v1h-1zM157 369h1v1h-1zM157 371h1v1h-1zM157 373h1v1h-1zM157 375h1v1h-1zM157 377h1v1h-1zM157 379h1v1h-1zM157 381h1v1h-1zM157 383h1v1h-1zM157 385h1v1h-1zM157 387h1v1h-1zM157 389h1v1h-1zM157 391h1v1h-1zM157 393h1v1h-1zM157 395h1v1h-1zM157 397h1v1h-1z" fill="#0000ff"/>
<path d="" fill="#00ff00"/>
<path d="M106 397h1v1h-1zM106 398h1v1h-1zM106 399h1v1h-1zM107 396h1v1h-1zM107 400h1v1h-1zM108 395h1v1h-1zM108 401h1v1h-1zM109 395h1v1h-1zM109 397h1v1h-1zM109 398h1v1h-1zM109 399h1v1h-1zM109 401h1v1h-1zM110 395h1v1h-1zM110 396h1v1h-1zM110 400h1v1h-1zM110 401h1v1h-1zM111 395h1v1h-1zM111 396h1v1h-1zM111 400h1v1h-1zM111 401h1v1h-1zM112 395h1v1h-1zM112 397h1v1h-1zM112 398h1v1h-1zM112 399h1v1h-1zM112 401h1v1h-1zM113 395h1v1h-1zM113 396h1v1h-1zM113 400h1v1h-1zM113 401h1v1h-1zM114 395h1v1h-1zM114 396h1v1h-1zM114 400h1v1h-1zM114 401h1v1h-1zM115 395h1v1h-1zM115 397h1v1h-1zM115 398h1v1h-1zM115 399h1v1h-1zM115 401h1v1h-1zM116 395h1v1h-1zM116 396h1v1h-1zM116 400h1v1h-1zM116 401h1v1h-1zM117 395h1v1h-1zM117 396h1v1h-1zM117 400h1v1h-1zM117 401h1v1h-1zM118 395h1v1h-1zM118 396h1v1h-1zM118 397h1v1h-1zM118 398h1v1h-1zM118 399h1v1h-1zM118 401h1v1h-1zM119 394h1v1h-1zM119 395h1v1h-1zM119 398h1v1h-1zM119 401h1v1h-1zM120 393h1v1h-1zM120 396h1v1h-1zM120 399h1v1h-1zM120 400h1v1h-1zM121 393h1v1h-1zM121 394h1v1h-1zM121 395h1v1h-1zM121 397h1v1h-1zM121 398h1v1h-1zM121 399h1v1h-1zM122 392h1v1h-1zM122 393h1v1h-1zM122 396h1v1h-1zM122 399h1v1h-1zM123 391h1v1h-1zM123 394h1v1h-1zM123 397h1v1h-1zM123 398h1v1h-1zM124 391h1v1h-1zM124 395h1v1h-1zM124 396h1v1h-1zM124 397h1v1h-1zM125 390h1v1h-1zM125 391h1v1h-1zM125 392h1v1h-1zM125 397h1v1h-1zM126 389h1v1h-1zM126 392h1v1h-1zM126 393h1v1h-1zM126 396h1v1h-1zM127 388h1v1h-1zM127 393h1v1h-1zM127 394h1v1h-1zM127 395h1v1h-1zM128 388h1v1h-1zM128 394h1v1h-1zM129 385h1v1h-1zM129 386h1v1h-1zM129 387h1v1h-1zM129 388h1v1h-1zM129 394h1v1h-1zM130 384h1v1h-1zM130 388h1v1h-1zM130 389h1v1h-1zM130 393h1v1h-1zM131 383h1v1h-1zM131 389h1v1h-1zM131 390h1v1h-1zM131 391h1v1h-1zM131 392h1v1h-1zM132 383h1v1h-1zM132 389h1v1h-1zM133 379h1v1h-1zM133 380h1v1h-1zM133 381h1v1h-1zM133 383h1v1h-1zM133 389h1v1h-1zM134 378h1v1h-1zM134 382h1v1h-1zM134 384h1v1h-1zM134 388h1v1h-1zM135 377h1v1h-1zM135 383h1v1h-1zM135 385h1v1h-1zM135 386h1v1h-1zM135 387h1v1h-1zM136 377h1v1h-1zM136 383h1v1h-1zM137 369h1v1h-1zM137 370h1v1h-1zM137 371h1v1h-1zM137 377h1v1h-1zM137 383h1v1h-1zM138 368h1v1h-1zM138 372h1v1h-1zM138 378h1v1h-1zM138 382h1v1h-1zM139 367h1v1h-1zM139 373h1v1h-1zM139 379h1v1h-1zM139 380h1v1h-1zM139 381h1v1h-1zM140 367h1v1h-1zM140 373h1v1h-1zM141 356h1v1h-1zM141 357h1v1h-1zM141 358h1v1h-1zM141 367h1v1h-1zM141 373h1v1h-1zM142 355h1v1h-1zM142 359h1v1h-1zM142 368h1v1h-1zM142 372h1v1h-1zM143 354h1v1h-1zM143 360h1v1h-1zM143 369h1v1h-1zM143 370h1v1h-1zM143 371h1v1h-1zM144 354h1v1h-1zM144 360h1v1h-1zM144 401h1v1h-1zM144 402h1v1h-1zM144 403h1v1h-1zM145 339h1v1h-1zM145 340h1v1h-1zM145 341h1v1h-1zM145 354h1v1h-1zM145 360h1v1h-1zM145 400h1v1h-1zM145 404h1v1h-1zM146 338h1v1h-1zM146 342h1v1h-1zM146 355h1v1h-1zM146 359h1v1h-1zM146 399h1v1h-1zM146 405h1v1h-1zM147 323h1v1h-1zM147 324h1v1h-1zM147 325h1v1h-1zM147 337h1v1h-1zM147 343h1v1h-1zM147 356h1v1h-1zM147 357h1v1h-1zM147 358h1v1h-1zM147 399h1v1h-1zM147 405h1v1h-1zM148 322h1v1h-1zM148 326h1v1h-1zM148 337h1v1h-1zM148 343h1v1h-1zM148 399h1v1h-1zM148 405h1v1h-1zM149 321h1v1h-1zM149 327h1v1h-1zM149 337h1v1h-1zM149 343h1v1h-1zM149 400h1v1h-1zM149 404h1v1h-1zM150 321h1v1h-1zM150 327h1v1h-1zM150 338h1v1h-1zM150 342h1v1h-1zM150 401h1v1h-1zM150 402h1v1h-1zM150 403h1v1h-1zM151 309h1v1h-1zM151 310h1v1h-1zM151 311h1v1h-1zM151 321h1v1h-1zM151 327h1v1h-1zM151 339h1v1h-1zM151 340h1v1h-1zM151 341h1v1h-1zM152 308h1v1h-1zM152 312h1v1h-1zM152 322h1v1h-1zM152 326h1v1h-1zM153 307h1v1h-1zM153 313h1v1h-1zM153 323h1v1h-1zM153 324h1v1h-1zM153 325h1v1h-1zM154 295h1v1h-1zM154 296h1v1h-1zM154 297h1v1h-1zM154 307h1v1h-1zM154 313h1v1h-1zM155 258h1v1h-1zM155 259h1v1h-1zM155 260h1v1h-1zM155 276h1v1h-1zM155 277h1v1h-1zM155 278h1v1h-1zM155 294h1v1h-1zM155 298h1v1h-1zM155 307h1v1h-1zM155 313h1v1h-1zM156 257h1v1h-1zM156 261h1v1h-1zM156 275h1v1h-1zM156 279h1v1h-1zM156 293h1v1h-1zM156 299h1v1h-1zM156 308h1v1h-1zM156 312h1v1h-1zM157 235h1v1h-1zM157 236h1v1h-1zM157 237h1v1h-1zM157 256h1v1h-1zM157 262h1v1h-1zM157 274h1v1h-1zM157 280h1v1h-1zM157 293h1v1h-1zM157 299h1v1h-1zM157 309h1v1h-1zM157 310h1v1h-1zM157 311h1v1h-1zM158 234h1v1h-1zM158 238h1v1h-1zM158 256h1v1h-1zM158 262h1v1h-1zM158 274h1v1h-1zM158 280h1v1h-1zM158 293h1v1h-1zM158 299h1v1h-1zM159 213h1v1h-1zM159 214h1v1h-1zM159 215h1v1h-1zM159 233h1v1h-1zM159 239h1v1h-1zM159 256h1v1h-1zM159 262h1v1h-1zM159 274h1v1h-1zM159 280h1v1h-1zM159 294h1v1h-1zM159 298h1v1h-1zM160 212h1v1h-1zM160 216h1v1h-1zM160 233h1v1h-1zM160 239h1v1h-1zM160 257h1v1h-1zM160 261h1v1h-1zM160 275h1v1h-1zM160 279h1v1h-1zM160 295h1v1h-1zM160 296h1v1h-1zM160 297h1v1h-1zM161 211h1v1h-1zM161 217h1v1h-1zM161 233h1v1h-1zM161 239h1v1h-1zM161 258h1v1h-1zM161 259h1v1h-1zM161 260h1v1h-1zM161 276h1v1h-1zM161 277h1v1h-1zM161 278h1v1h-1zM162 195h1v1h-1zM162 196h1v1h-1zM162 197h1v1h-1zM162 211h1v1h-1zM162 217h1v1h-1zM162 234h1v1h-1zM162 238h1v1h-1zM163 194h1v1h-1zM163 198h1v1h-1zM163 211h1v1h-1zM163 217h1v1h-1zM163 235h1v1h-1zM163 236h1v1h-1zM163 237h1v1h-1zM164 193h1v1h-1zM164 199h1v1h-1zM164 212h1v1h-1zM164 216h1v1h-1zM165 177h1v1h-1zM165 178h1v1h-1zM165 179h1v1h-1zM165 193h1v1h-1zM165 199h1v1h-1zM165 213h1v1h-1zM165 214h1v1h-1zM165 215h1v1h-1zM166 176h1v1h-1zM166 180h1v1h-1zM166 193h1v1h-1zM166 199h1v1h-1zM167 175h1v1h-1zM167 181h1v1h-1zM167 194h1v1h-1zM167 198h1v1h-1zM168 167h1v1h-1zM168 168h1v1h-1zM168 169h1v1h-1zM168 175h1v1h-1zM168 181h1v1h-1zM168 195h1v1h-1zM168 196h1v1h-1zM168 197h1v1h-1zM169 166h1v1h-1zM169 170h1v1h-1zM169 175h1v1h-1zM169 181h1v1h-1zM170 165h1v1h-1zM170 171h1v1h-1zM170 176h1v1h-1zM170 180h1v1h-1zM171 158h1v1h-1zM171 159h1v1h-1zM171 160h1v1h-1zM171 165h1v1h-1zM171 171h1v1h-1zM171 177h1v1h-1zM171 178h1v1h-1zM171 179h1v1h-1zM172 157h1v1h-1zM172 159h1v1h-1zM172 160h1v1h-1zM172 161h1v1h-1zM172 165h1v1h-1zM172 171h1v1h-1zM173 155h1v1h-1zM173 156h1v1h-1zM173 157h1v1h-1zM173 158h1v1h-1zM173 162h1v1h-1zM173 166h1v1h-1zM173 170h1v1h-1zM174 154h1v1h-1zM174 156h1v1h-1zM174 157h1v1h-1zM174 158h1v1h-1zM174 159h1v1h-1zM174 162h1v1h-1zM174 163h1v1h-1zM174 167h1v1h-1zM174 168h1v1h-1zM174 169h1v1h-1zM175 152h1v1h-1zM175 153h1v1h-1zM175 154h1v1h-1zM175 156h1v1h-1zM175 157h1v1h-1zM175 159h1v1h-1zM175 160h1v1h-1zM175 162h1v1h-1zM175 163h1v1h-1zM176 151h1v1h-1zM176 153h1v1h-1zM176 154h1v1h-1zM176 155h1v1h-1zM176 157h1v1h-1zM176 159h1v1h-1zM176 161h1v1h-1zM176 163h1v1h-1zM177 149h1v1h-1zM177 150h1v1h-1zM177 151h1v1h-1zM177 152h1v1h-1zM177 153h1v1h-1zM177 155h1v1h-1zM177 156h1v1h-1zM177 158h1v1h-1zM177 159h1v1h-1zM177 160h1v1h-1zM177 161h1v1h-1zM177 162h1v1h-1zM178 148h1v1h-1zM178 150h1v1h-1zM178 151h1v1h-1zM178 152h1v1h-1zM178 153h1v1h-1zM178 154h1v1h-1zM178 155h1v1h-1zM178 156h1v1h-1zM178 157h1v1h-1zM178 158h1v1h-1zM178 159h1v1h-1zM178 160h1v1h-1zM178 161h1v1h-1zM179 146h1v1h-1zM179 147h1v1h-1zM179 148h1v1h-1zM179 150h1v1h-1zM179 151h1v1h-1zM179 153h1v1h-1zM179 154h1v1h-1zM179 155h1v1h-1zM179 156h1v1h-1zM179 157h1v1h-1zM179 160h1v1h-1zM180 145h1v1h-1zM180 147h1v1h-1zM180 149h1v1h-1zM180 151h1v1h-1zM180 153h1v1h-1zM180 155h1v1h-1zM180 157h1v1h-1zM180 158h1v1h-1zM180 159h1v1h-1zM181 144h1v1h-1zM181 145h1v1h-1zM181 146h1v1h-1zM181 147h1v1h-1zM181 148h1v1h-1zM181 149h1v1h-1zM181 150h1v1h-1zM181 152h1v1h-1zM181 153h1v1h-1zM181 154h1v1h-1zM181 155h1v1h-1zM181 156h1v1h-1zM182 143h1v1h-1zM182 144h1v1h-1zM182 147h1v1h-1zM182 148h1v1h-1zM182 149h1v1h-1zM182 150h1v1h-1zM182 151h1v1h-1zM182 152h1v1h-1zM182 153h1v1h-1zM182 154h1v1h-1zM182 155h1v1h-1zM183 142h1v1h-1zM183 144h1v1h-1zM183 146h1v1h-1zM183 147h1v1h-1zM183 148h1v1h-1zM183 149h1v1h-1zM183 150h1v1h-1zM183 151h1v1h-1zM183 152h1v1h-1zM183 154h1v1h-1zM184 142h1v1h-1zM184 143h1v1h-1zM184 144h1v1h-1zM184 145h1v1h-1zM184 146h1v1h-1zM184 148h1v1h-1zM184 149h1v1h-1zM184 151h1v1h-1zM184 152h1v1h-1zM184 153h1v1h-1zM185 141h1v1h-1zM185 142h1v1h-1zM185 144h1v1h-1zM185 145h1v1h-1zM185 146h1v1h-1zM185 147h1v1h-1zM185 148h1v1h-1zM185 150h1v1h-1zM185 152h1v1h-1zM186 140h1v1h-1zM186 141h1v1h-1zM186 142h1v1h-1zM186 143h1v1h-1zM186 144h1v1h-1zM186 146h1v1h-1zM186 147h1v1h-1zM186 150h1v1h-1zM186 151h1v1h-1zM187 139h1v1h-1zM187 140h1v1h-1zM187 142h1v1h-1zM187 143h1v1h-1zM187 144h1v1h-1zM187 145h1v1h-1zM187 146h1v1h-1zM187 148h1v1h-1zM187 149h1v1h-1zM187 150h1v1h-1zM188 138h1v1h-1zM188 139h1v1h-1zM188 140h1v1h-1zM188 141h1v1h-1zM188 142h1v1h-1zM188 144h1v1h-1zM188 145h1v1h-1zM188 146h1v1h-1zM188 148h1v1h-1zM188 149h1v1h-1zM189 138h1v1h-1zM189 140h1v1h-1zM189 141h1v1h-1zM189 142h1v1h-1zM189 144h1v1h-1zM189 145h1v1h-1zM189 146h1v1h-1zM189 147h1v1h-1zM189 148h1v1h-1zM190 137h1v1h-1zM190 138h1v1h-1zM190 139h1v1h-1zM190 140h1v1h-1zM190 142h1v1h-1zM190 143h1v1h-1zM190 144h1v1h-1zM190 146h1v1h-1zM190 147h1v1h-1zM191 136h1v1h-1zM191 137h1v1h-1zM191 138h1v1h-1zM191 139h1v1h-1zM191 140h1v1h-1zM191 143h1v1h-1zM191 144h1v1h-1zM191 145h1v1h-1zM191 146h1v1h-1zM192 135h1v1h-1zM192 136h1v1h-1zM192 137h1v1h-1zM192 138h1v1h-1zM192 139h1v1h-1zM192 140h1v1h-1zM192 141h1v1h-1zM192 142h1v1h-1zM192 143h1v1h-1zM192 144h1v1h-1zM192 145h1v1h-1zM193 135h1v1h-1zM193 138h1v1h-1zM193 139h1v1h-1zM193 141h1v1h-1zM193 142h1v1h-1zM193 143h1v1h-1zM193 144h1v1h-1zM194 134h1v1h-1zM194 135h1v1h-1zM194 137h1v1h-1zM194 138h1v1h-1zM194 139h1v1h-1zM194 140h1v1h-1zM194 141h1v1h-1zM194 143h1v1h-1zM195 134h1v1h-1zM195 136h1v1h-1zM195 137h1v1h-1zM195 138h1v1h-1zM195 140h1v1h-1zM195 141h1v1h-1zM195 142h1v1h-1zM195 143h1v1h-1zM196 134h1v1h-1zM196 135h1v1h-1zM196 136h1v1h-1zM196 137h1v1h-1zM196 138h1v1h-1zM196 139h1v1h-1zM196 140h1v1h-1zM196 142h1v1h-1zM196 143h1v1h-1zM197 134h1v1h-1zM197 135h1v1h-1zM197 136h1v1h-1zM197 137h1v1h-1zM197 138h1v1h-1zM197 139h1v1h-1zM197 140h1v1h-1zM197 142h1v1h-1zM198 134h1v1h-1zM198 135h1v1h-1zM198 136h1v1h-1zM198 137h1v1h-1zM198 138h1v1h-1zM198 139h1v1h-1zM198 140h1v1h-1zM198 141h1v1h-1zM198 142h1v1h-1zM199 133h1v1h-1zM199 134h1v1h-1zM199 135h1v1h-1zM199 136h1v1h-1zM199 137h1v1h-1zM199 139h1v1h-1zM199 140h1v1h-1zM199 141h1v1h-1zM200 133h1v1h-1zM200 135h1v1h-1zM200 137h1v1h-1zM200 138h1v1h-1zM200 139h1v1h-1zM200 140h1v1h-1zM200 141h1v1h-1zM201 132h1v1h-1zM201 133h1v1h-1zM201 134h1v1h-1zM201 135h1v1h-1zM201 136h1v1h-1zM201 137h1v1h-1zM201 138h1v1h-1zM201 139h1v1h-1zM201 140h1v1h-1zM202 132h1v1h-1zM202 133h1v1h-1zM202 134h1v1h-1zM202 137h1v1h-1zM202 138h1v1h-1zM202 139h1v1h-1zM203 132h1v1h-1zM203 133h1v1h-1zM203 134h1v1h-1zM203 135h1v1h-1zM203 136h1v1h-1zM203 137h1v1h-1zM203 138h1v1h-1zM204 132h1v1h-1zM204 133h1v1h-1zM204 136h1v1h-1zM204 137h1v1h-1zM204 138h1v1h-1zM205 131h1v1h-1zM205 132h1v1h-1zM205 134h1v1h-1zM205 135h1v1h-1zM205 136h1v1h-1zM205 137h1v1h-1zM205 138h1v1h-1zM206 131h1v1h-1zM206 133h1v1h-1zM206 134h1v1h-1zM206 135h1v1h-1zM206 137h1v1h-1zM207 131h1v1h-1zM207 132h1v1h-1zM207 134h1v1h-1zM207 135h1v1h-1zM207 136h1v1h-1zM207 137h1v1h-1zM208 131h1v1h-1zM208 132h1v1h-1zM208 133h1v1h-1zM208 134h1v1h-1zM208 136h1v1h-1zM208 137h1v1h-1zM209 131h1v1h-1zM209 133h1v1h-1zM209 134h1v1h-1zM209 135h1v1h-1zM209 137h1v1h-1zM210 130h1v1h-1zM210 131h1v1h-1zM210 132h1v1h-1zM210 133h1v1h-1zM210 136h1v1h-1zM210 137h1v1h-1zM211 130h1v1h-1zM211 132h1v1h-1zM211 134h1v1h-1zM211 136h1v1h-1zM212 129h1v1h-1zM212 130h1v1h-1zM212 131h1v1h-1zM212 132h1v1h-1zM212 133h1v1h-1zM212 134h1v1h-1zM212 135h1v1h-1zM212 136h1v1h-1zM213 129h1v1h-1zM213 130h1v1h-1zM213 131h1v1h-1zM213 134h1v1h-1zM213 135h1v1h-1zM214 129h1v1h-1zM214 131h1v1h-1zM214 132h1v1h-1zM214 133h1v1h-1zM214 134h1v1h-1zM214 135h1v1h-1zM215 129h1v1h-1zM215 130h1v1h-1zM215 134h1v1h-1zM215 135h1v1h-1zM216 129h1v1h-1zM216 131h1v1h-1zM216 132h1v1h-1zM216 133h1v1h-1zM216 135h1v1h-1zM217 129h1v1h-1zM217 130h1v1h-1zM217 131h1v1h-1zM217 132h1v1h-1zM217 134h1v1h-1zM217 135h1v1h-1zM218 129h1v1h-1zM218 131h1v1h-1zM218 132h1v1h-1zM218 133h1v1h-1zM218 135h1v1h-1zM219 128h1v1h-1zM219 130h1v1h-1zM219 131h1v1h-1zM219 132h1v1h-1zM219 134h1v1h-1zM220 128h1v1h-1zM220 129h1v1h-1zM220 131h1v1h-1zM220 132h1v1h-1zM220 133h1v1h-1zM220 134h1v1h-1zM221 128h1v1h-1zM221 130h1v1h-1zM221 131h1v1h-1zM221 132h1v1h-1zM221 134h1v1h-1zM222 128h1v1h-1zM222 129h1v1h-1zM222 133h1v1h-1zM222 134h1v1h-1zM223 128h1v1h-1zM223 130h1v1h-1zM223 131h1v1h-1zM223 132h1v1h-1zM223 134h1v1h-1zM224 128h1v1h-1zM224 129h1v1h-1zM224 133h1v1h-1zM224 134h1v1h-1zM225 128h1v1h-1zM225 129h1v1h-1zM225 130h1v1h-1zM225 131h1v1h-1zM225 132h1v1h-1zM225 134h1v1h-1zM226 128h1v1h-1zM226 129h1v1h-1zM226 132h1v1h-1zM226 133h1v1h-1zM226 134h1v1h-1zM227 127h1v1h-1zM227 128h1v1h-1zM227 130h1v1h-1zM227 131h1v1h-1zM227 132h1v1h-1zM227 133h1v1h-1zM227 134h1v1h-1zM228 127h1v1h-1zM228 129h1v1h-1zM228 130h1v1h-1zM228 131h1v1h-1zM228 133h1v1h-1zM229 127h1v1h-1zM229 128h1v1h-1zM229 130h1v1h-1zM229 131h1v1h-1zM229 132h1v1h-1zM229 133h1v1h-1zM230 127h1v1h-1zM230 128h1v1h-1zM230 129h1v1h-1zM230 130h1v1h-1zM230 131h1v1h-1zM230 132h1v1h-1zM230 133h1v1h-1zM231 127h1v1h-1zM231 128h1v1h-1zM231 129h1v1h-1zM231 130h1v1h-1zM231 131h1v1h-1zM231 132h1v1h-1zM231 133h1v1h-1zM232 127h1v1h-1zM232 128h1v1h-1zM232 129h1v1h-1zM232 130h1v1h-1zM232 133h1v1h-1zM233 127h1v1h-1zM233 128h1v1h-1zM233 131h1v1h-1zM233 132h1v1h-1zM233 133h1v1h-1zM234 126h1v1h-1zM234 127h1v1h-1zM234 128h1v1h-1zM234 129h1v1h-1zM234 130h1v1h-1zM234 131h1v1h-1zM234 132h1v1h-1zM234 133h1v1h-1zM235 126h1v1h-1zM235 127h1v1h-1zM235 128h1v1h-1zM235 131h1v1h-1zM235 132h1v1h-1zM236 126h1v1h-1zM236 128h1v1h-1zM236 129h1v1h-1zM236 130h1v1h-1zM236 131h1v1h-1zM236 132h1v1h-1zM237 126h1v1h-1zM237 127h1v1h-1zM237 131h1v1h-1zM237 132h1v1h-1zM238 126h1v1h-1zM238 128h1v1h-1zM238 129h1v1h-1zM238 130h1v1h-1zM238 132h1v1h-1zM239 126h1v1h-1zM239 127h1v1h-1zM239 128h1v1h-1zM239 129h1v1h-1zM239 130h1v1h-1zM239 131h1v1h-1zM239 132h1v1h-1zM240 126h1v1h-1zM240 127h1v1h-1zM240 128h1v1h-1zM240 129h1v1h-1zM240 130h1v1h-1zM240 131h1v1h-1zM240 132h1v1h-1zM241 126h1v1h-1zM241 127h1v1h-1zM241 128h1v1h-1zM241 129h1v1h-1zM241 130h1v1h-1zM241 131h1v1h-1zM241 132h1v1h-1zM242 126h1v1h-1zM242 127h1v1h-1zM242 128h1v1h-1zM242 129h1v1h-1zM242 130h1v1h-1zM242 131h1v1h-1zM242 132h1v1h-1zM243 126h1v1h-1zM243 128h1v1h-1zM243 129h1v1h-1zM243 130h1v1h-1zM243 132h1v1h-1zM244 126h1v1h-1zM244 127h1v1h-1zM244 131h1v1h-1zM244 132h1v1h-1zM245 126h1v1h-1zM245 128h1v1h-1zM245 129h1v1h-1zM245 130h1v1h-1zM245 132h1v1h-1zM246 126h1v1h-1zM246 127h1v1h-1zM246 131h1v1h-1zM246 132h1v1h-1zM247 126h1v1h-1zM247 127h1v1h-1zM247 128h1v1h-1zM247 129h1v1h-1zM247 130h1v1h-1zM247 132h1v1h-1zM248 126h1v1h-1zM248 127h1v1h-1zM248 130h1v1h-1zM248 131h1v1h-1zM248 132h1v1h-1zM249 125h1v1h-1zM249 126h1v1h-1zM249 128h1v1h-1zM249 129h1v1h-1zM249 130h1v1h-1zM249 131h1v1h-1zM249 132h1v1h-1zM250 125h1v1h-1zM250 127h1v1h-1zM250 128h1v1h-1zM250 129h1v1h-1zM250 131h1v1h-1zM251 125h1v1h-1zM251 126h1v1h-1zM251 128h1v1h-1zM251 129h1v1h-1zM251 130h1v1h-1zM251 131h1v1h-1zM252 125h1v1h-1zM252 126h1v1h-1zM252 127h1v1h-1zM252 128h1v1h-1zM252 129h1v1h-1zM252 130h1v1h-1zM252 131h1v1h-1zM253 125h1v1h-1zM253 126h1v1h-1zM253 127h1v1h-1zM253 128h1v1h-1zM253 129h1v1h-1zM253 130h1v1h-1zM253 131h1v1h-1zM254 125h1v1h-1zM254 131h1v1h-1zM255 125h1v1h-1zM255 126h1v1h-1zM255 130h1v1h-1zM255 131h1v1h-1zM256 125h1v1h-1zM256 127h1v1h-1zM256 128h1v1h-1zM256 129h1v1h-1zM256 131h1v1h-1zM257 126h1v1h-1zM257 130h1v1h-1zM258 127h1v1h-1zM258 128h1v1h-1zM258 129h1v1h-1z" fill="#0000ff"/>
<path d="M94 376h1v1h-1zM95 374h1v1h-1zM95 376h1v1h-1zM95 378h1v1h-1zM96 375h1v1h-1zM96 376h1v1h-1zM96 377h1v1h-1zM97 373h1v1h-1zM97 374h1v1h-1zM97 375h1v1h-1zM97 376h1v1h-1zM97 377h1v1h-1zM97 378h1v1h-1zM97 379h1v1h-1zM98 375h1v1h-1zM98 376h1v1h-1zM98 377h1v1h-1zM99 374h1v1h-1zM99 376h1v1h-1zM99 378h1v1h-1zM100 376h1v1h-1zM106 395h1v1h-1zM107 393h1v1h-1zM107 395h1v1h-1zM107 397h1v1h-1zM108 394h1v1h-1zM108 395h1v1h-1zM108 396h1v1h-1zM109 392h1v1h-1zM109 393h1v1h-1zM109 394h1v1h-1zM109 395h1v1h-1zM109 396h1v1h-1zM109 397h1v1h-1zM109 398h1v1h-1zM110 393h1v1h-1zM110 394h1v1h-1zM110 395h1v1h-1zM110 396h1v1h-1zM110 397h1v1h-1zM111 393h1v1h-1zM111 394h1v1h-1zM111 395h1v1h-1zM111 396h1v1h-1zM111 397h1v1h-1zM112 392h1v1h-1zM112 393h1v1h-1zM112 394h1v1h-1zM112 395h1v1h-1zM112 396h1v1h-1zM112 397h1v1h-1zM112 398h1v1h-1zM113 393h1v1h-1zM113 394h1v1h-1zM113 395h1v1h-1zM113 396h1v1h-1zM113 397h1v1h-1zM114 393h1v1h-1zM114 394h1v1h-1zM114 395h1v1h-1zM114 396h1v1h-1zM114 397h1v1h-1zM115 392h1v1h-1zM115 393h1v1h-1zM115 394h1v1h-1zM115 395h1v1h-1zM115 396h1v1h-1zM115 397h1v1h-1zM115 398h1v1h-1zM116 393h1v1h-1zM116 394h1v1h-1zM116 395h1v1h-1zM116 396h1v1h-1zM116 397h1v1h-1zM117 393h1v1h-1zM117 394h1v1h-1zM117 395h1v1h-1zM117 396h1v1h-1zM117 397h1v1h-1zM118 392h1v1h-1zM118 393h1v1h-1zM118 394h1v1h-1zM118 395h1v1h-1zM118 396h1v1h-1zM118 397h1v1h-1zM118 398h1v1h-1zM119 391h1v1h-1zM119 393h1v1h-1zM119 394h1v1h-1zM119 395h1v1h-1zM119 396h1v1h-1zM120 392h1v1h-1zM120 393h1v1h-1zM120 394h1v1h-1zM120 395h1v1h-1zM120 397h1v1h-1zM121 390h1v1h-1zM121 391h1v1h-1zM121 392h1v1h-1zM121 393h1v1h-1zM121 394h1v1h-1zM121 395h1v1h-1zM121 396h1v1h-1zM122 389h1v1h-1zM122 391h1v1h-1zM122 392h1v1h-1zM122 393h1v1h-1zM122 394h1v1h-1zM123 390h1v1h-1zM123 391h1v1h-1zM123 392h1v1h-1zM123 393h1v1h-1zM123 395h1v1h-1zM124 388h1v1h-1zM124 389h1v1h-1zM124 390h1v1h-1zM124 391h1v1h-1zM124 392h1v1h-1zM124 393h1v1h-1zM124 394h1v1h-1zM125 388h1v1h-1zM125 390h1v1h-1zM125 391h1v1h-1zM125 392h1v1h-1zM126 386h1v1h-1zM126 388h1v1h-1zM126 389h1v1h-1zM126 390h1v1h-1zM126 391h1v1h-1zM126 393h1v1h-1zM127 387h1v1h-1zM127 388h1v1h-1zM127 389h1v1h-1zM127 391h1v1h-1zM128 385h1v1h-1zM128 386h1v1h-1zM128 387h1v1h-1zM128 388h1v1h-1zM128 389h1v1h-1zM128 390h1v1h-1zM128 391h1v1h-1zM129 383h1v1h-1zM129 387h1v1h-1zM129 388h1v1h-1zM129 389h1v1h-1zM130 381h1v1h-1zM130 383h1v1h-1zM130 385h1v1h-1zM130 386h1v1h-1zM130 388h1v1h-1zM130 390h1v1h-1zM131 382h1v1h-1zM131 383h1v1h-1zM131 384h1v1h-1zM131 388h1v1h-1zM132 380h1v1h-1zM132 381h1v1h-1zM132 382h1v1h-1zM132 383h1v1h-1zM132 384h1v1h-1zM132 385h1v1h-1zM132 386h1v1h-1zM133 380h1v1h-1zM133 382h1v1h-1zM133 383h1v1h-1zM133 384h1v1h-1zM134 378h1v1h-1zM134 380h1v1h-1zM134 381h1v1h-1zM134 382h1v1h-1zM134 383h1v1h-1zM134 385h1v1h-1zM135 379h1v1h-1zM135 380h1v1h-1zM135 381h1v1h-1zM135 383h1v1h-1zM136 378h1v1h-1zM136 379h1v1h-1zM136 380h1v1h-1zM136 381h1v1h-1zM136 382h1v1h-1zM137 370h1v1h-1zM137 379h1v1h-1zM137 380h1v1h-1zM137 381h1v1h-1zM138 368h1v1h-1zM138 370h1v1h-1zM138 372h1v1h-1zM138 378h1v1h-1zM138 380h1v1h-1zM138 382h1v1h-1zM139 369h1v1h-1zM139 370h1v1h-1zM139 371h1v1h-1zM139 380h1v1h-1zM140 368h1v1h-1zM140 369h1v1h-1zM140 370h1v1h-1zM140 371h1v1h-1zM140 372h1v1h-1zM141 357h1v1h-1zM141 369h1v1h-1zM141 370h1v1h-1zM141 371h1v1h-1zM142 355h1v1h-1zM142 357h1v1h-1zM142 359h1v1h-1zM142 368h1v1h-1zM142 370h1v1h-1zM142 372h1v1h-1zM143 356h1v1h-1zM143 357h1v1h-1zM143 358h1v1h-1zM143 370h1v1h-1zM144 355h1v1h-1zM144 356h1v1h-1zM144 357h1v1h-1zM144 358h1v1h-1zM144 359h1v1h-1zM144 401h1v1h-1zM145 340h1v1h-1zM145 356h1v1h-1zM145 357h1v1h-1zM145 358h1v1h-1zM145 399h1v1h-1zM145 401h1v1h-1zM145 403h1v1h-1zM146 338h1v1h-1zM146 340h1v1h-1zM146 342h1v1h-1zM146 355h1v1h-1zM146 357h1v1h-1zM146 359h1v1h-1zM146 400h1v1h-1zM146 401h1v1h-1zM146 402h1v1h-1zM147 324h1v1h-1zM147 339h1v1h-1zM147 340h1v1h-1zM147 341h1v1h-1zM147 357h1v1h-1zM147 398h1v1h-1zM147 399h1v1h-1zM147 400h1v1h-1zM147 401h1v1h-1zM147 402h1v1h-1zM147 403h1v1h-1zM147 404h1v1h-1zM148 322h1v1h-1zM148 324h1v1h-1zM148 326h1v1h-1zM148 338h1v1h-1zM148 339h1v1h-1zM148 340h1v1h-1zM148 341h1v1h-1zM148 342h1v1h-1zM148 400h1v1h-1zM148 401h1v1h-1zM148 402h1v1h-1zM149 323h1v1h-1zM149 324h1v1h-1zM149 325h1v1h-1zM149 339h1v1h-1zM149 340h1v1h-1zM149 341h1v1h-1zM149 399h1v1h-1zM149 401h1v1h-1zM149 403h1v1h-1zM150 322h1v1h-1zM150 323h1v1h-1zM150 324h1v1h-1zM150 325h1v1h-1zM150 326h1v1h-1zM150 338h1v1h-1zM150 340h1v1h-1zM150 342h1v1h-1zM150 401h1v1h-1zM151 310h1v1h-1zM151 323h1v1h-1zM151 324h1v1h-1zM151 325h1v1h-1zM151 340h1v1h-1zM152 308h1v1h-1zM152 310h1v1h-1zM152 312h1v1h-1zM152 322h1v1h-1zM152 324h1v1h-1zM152 326h1v1h-1zM153 309h1v1h-1zM153 310h1v1h-1zM153 311h1v1h-1zM153 324h1v1h-1zM154 296h1v1h-1zM154 308h1v1h-1zM154 309h1v1h-1zM154 310h1v1h-1zM154 311h1v1h-1zM154 312h1v1h-1zM155 259h1v1h-1zM155 277h1v1h-1zM155 294h1v1h-1zM155 296h1v1h-1zM155 298h1v1h-1zM155 309h1v1h-1zM155 310h1v1h-1zM155 311h1v1h-1zM156 257h1v1h-1zM156 259h1v1h-1zM156 261h1v1h-1zM156 275h1v1h-1zM156 277h1v1h-1zM156 279h1v1h-1zM156 295h1v1h-1zM156 296h1v1h-1zM156 297h1v1h-1zM156 308h1v1h-1zM156 310h1v1h-1zM156 312h1v1h-1zM157 236h1v1h-1zM157 258h1v1h-1zM157 259h1v1h-1zM157 260h1v1h-1zM157 276h1v1h-1zM157 277h1v1h-1zM157 278h1v1h-1zM157 294h1v1h-1zM157 295h1v1h-1zM157 296h1v1h-1zM157 297h1v1h-1zM157 298h1v1h-1zM157 310h1v1h-1zM158 234h1v1h-1zM158 236h1v1h-1zM158 238h1v1h-1zM158 257h1v1h-1zM158 258h1v1h-1zM158 259h1v1h-1zM158 260h1v1h-1zM158 261h1v1h-1zM158 275h1v1h-1zM158 276h1v1h-1zM158 277h1v1h-1zM158 278h1v1h-1zM158 279h1v1h-1zM158 295h1v1h-1zM158 296h1v1h-1zM158 297h1v1h-1zM159 214h1v1h-1zM159 235h1v1h-1zM159 236h1v1h-1zM159 237h1v1h-1zM159 258h1v1h-1zM159 259h1v1h-1zM159 260h1v1h-1zM159 276h1v1h-1zM159 277h1v1h-1zM159 278h1v1h-1zM159 294h1v1h-1zM159 296h1v1h-1zM159 298h1v1h-1zM160 212h1v1h-1zM160 214h1v1h-1zM160 216h1v1h-1zM160 234h1v1h-1zM160 235h1v1h-1zM160 236h1v1h-1zM160 237h1v1h-1zM160 238h1v1h-1zM160 257h1v1h-1zM160 259h1v1h-1zM160 261h1v1h-1zM160 275h1v1h-1zM160 277h1v1h-1zM160 279h1v1h-1zM160 296h1v1h-1zM161 213h1v1h-1zM161 214h1v1h-1zM161 215h1v1h-1zM161 235h1v1h-1zM161 236h1v1h-1zM161 237h1v1h-1zM161 259h1v1h-1zM161 277h1v1h-1zM162 196h1v1h-1zM162 212h1v1h-1zM162 213h1v1h-1zM162 214h1v1h-1zM162 215h1v1h-1zM162 216h1v1h-1zM162 234h1v1h-1zM162 236h1v1h-1zM162 238h1v1h-1zM163 194h1v1h-1zM163 196h1v1h-1zM163 198h1v1h-1zM163 213h1v1h-1zM163 214h1v1h-1zM163 215h1v1h-1zM163 236h1v1h-1zM164 195h1v1h-1zM164 196h1v1h-1zM164 197h1v1h-1zM164 212h1v1h-1zM164 214h1v1h-1zM164 216h1v1h-1zM165 178h1v1h-1zM165 194h1v1h-1zM165 195h1v1h-1zM165 196h1v1h-1zM165 197h1v1h-1zM165 198h1v1h-1zM165 214h1v1h-1zM166 176h1v1h-1zM166 178h1v1h-1zM166 180h1v1h-1zM166 195h1v1h-1zM166 196h1v1h-1zM166 197h1v1h-1zM167 177h1v1h-1zM167 178h1v1h-1zM167 179h1v1h-1zM167 194h1v1h-1zM167 196h1v1h-1zM167 198h1v1h-1zM168 176h1v1h-1zM168 177h1v1h-1zM168 178h1v1h-1zM168 179h1v1h-1zM168 180h1v1h-1zM168 196h1v1h-1zM169 166h1v1h-1zM169 168h1v1h-1zM169 170h1v1h-1zM169 177h1v1h-1zM169 178h1v1h-1zM169 179h1v1h-1zM170 167h1v1h-1zM170 168h1v1h-1zM170 169h1v1h-1zM170 171h1v1h-1zM170 176h1v1h-1zM170 178h1v1h-1zM170 180h1v1h-1zM171 166h1v1h-1zM171 167h1v1h-1zM171 168h1v1h-1zM171 169h1v1h-1zM171 170h1v1h-1zM171 178h1v1h-1zM172 157h1v1h-1zM172 159h1v1h-1zM172 161h1v1h-1zM172 167h1v1h-1zM172 168h1v1h-1zM172 169h1v1h-1zM172 170h1v1h-1zM172 171h1v1h-1zM173 158h1v1h-1zM173 159h1v1h-1zM173 160h1v1h-1zM173 162h1v1h-1zM173 166h1v1h-1zM173 168h1v1h-1zM173 169h1v1h-1zM173 170h1v1h-1zM174 155h1v1h-1zM174 157h1v1h-1zM174 158h1v1h-1zM174 159h1v1h-1zM174 160h1v1h-1zM174 161h1v1h-1zM174 167h1v1h-1zM174 169h1v1h-1zM174 171h1v1h-1zM175 155h1v1h-1zM175 156h1v1h-1zM175 157h1v1h-1zM175 158h1v1h-1zM175 159h1v1h-1zM175 160h1v1h-1zM175 161h1v1h-1zM175 162h1v1h-1zM176 151h1v1h-1zM176 153h1v1h-1zM176 155h1v1h-1zM176 156h1v1h-1zM176 157h1v1h-1zM176 158h1v1h-1zM176 159h1v1h-1zM176 160h1v1h-1zM176 161h1v1h-1zM177 152h1v1h-1zM177 153h1v1h-1zM177 154h1v1h-1zM177 155h1v1h-1zM177 156h1v1h-1zM177 157h1v1h-1zM177 158h1v1h-1zM177 159h1v1h-1zM177 160h1v1h-1zM177 162h1v1h-1zM178 149h1v1h-1zM178 151h1v1h-1zM178 152h1v1h-1zM178 153h1v1h-1zM178 154h1v1h-1zM178 155h1v1h-1zM178 156h1v1h-1zM178 157h1v1h-1zM178 158h1v1h-1zM178 159h1v1h-1zM179 149h1v1h-1zM179 150h1v1h-1zM179 151h1v1h-1zM179 152h1v1h-1zM179 153h1v1h-1zM179 154h1v1h-1zM179 155h1v1h-1zM179 156h1v1h-1zM179 157h1v1h-1zM179 159h1v1h-1zM180 149h1v1h-1zM180 150h1v1h-1zM180 151h1v1h-1zM180 152h1v1h-1zM180 153h1v1h-1zM180 154h1v1h-1zM180 155h1v1h-1zM181 146h1v1h-1zM181 148h1v1h-1zM181 149h1v1h-1zM181 150h1v1h-1zM181 151h1v1h-1zM181 152h1v1h-1zM181 153h1v1h-1zM181 154h1v1h-1zM181 156h1v1h-1zM182 147h1v1h-1zM182 148h1v1h-1zM182 149h1v1h-1zM182 150h1v1h-1zM182 151h1v1h-1zM182 152h1v1h-1zM182 153h1v1h-1zM183 144h1v1h-1zM183 146h1v1h-1zM183 147h1v1h-1zM183 148h1v1h-1zM183 149h1v1h-1zM183 150h1v1h-1zM183 151h1v1h-1zM183 153h1v1h-1zM184 144h1v1h-1zM184 145h1v1h-1zM184 146h1v1h-1zM184 147h1v1h-1zM184 148h1v1h-1zM184 149h1v1h-1zM184 150h1v1h-1zM184 151h1v1h-1zM185 142h1v1h-1zM185 144h1v1h-1zM185 145h1v1h-1zM185 146h1v1h-1zM185 147h1v1h-1zM185 148h1v1h-1zM185 149h1v1h-1zM185 150h1v1h-1zM186 142h1v1h-1zM186 143h1v1h-1zM186 144h1v1h-1zM186 145h1v1h-1zM186 146h1v1h-1zM186 147h1v1h-1zM186 148h1v1h-1zM186 149h1v1h-1zM186 151h1v1h-1zM187 140h1v1h-1zM187 142h1v1h-1zM187 143h1v1h-1zM187 144h1v1h-1zM187 145h1v1h-1zM187 146h1v1h-1zM187 147h1v1h-1zM187 148h1v1h-1zM188 140h1v1h-1zM188 141h1v1h-1zM188 142h1v1h-1zM188 143h1v1h-1zM188 144h1v1h-1zM188 145h1v1h-1zM188 146h1v1h-1zM188 148h1v1h-1zM189 138h1v1h-1zM189 140h1v1h-1zM189 141h1v1h-1zM189 142h1v1h-1zM189 143h1v1h-1zM189 144h1v1h-1zM189 145h1v1h-1zM189 146h1v1h-1zM190 139h1v1h-1zM190 140h1v1h-1zM190 141h1v1h-1zM190 142h1v1h-1zM190 143h1v1h-1zM190 144h1v1h-1zM190 146h1v1h-1zM191 138h1v1h-1zM191 139h1v1h-1zM191 140h1v1h-1zM191 141h1v1h-1zM191 142h1v1h-1zM191 143h1v1h-1zM191 144h1v1h-1zM192 137h1v1h-1zM192 139h1v1h-1zM192 140h1v1h-1zM192 141h1v1h-1zM192 142h1v1h-1zM192 143h1v1h-1zM192 144h1v1h-1zM193 138h1v1h-1zM193 139h1v1h-1zM193 140h1v1h-1zM193 141h1v1h-1zM193 142h1v1h-1zM194 136h1v1h-1zM194 137h1v1h-1zM194 138h1v1h-1zM194 139h1v1h-1zM194 140h1v1h-1zM194 141h1v1h-1zM194 143h1v1h-1zM195 136h1v1h-1zM195 137h1v1h-1zM195 138h1v1h-1zM195 139h1v1h-1zM195 140h1v1h-1zM195 141h1v1h-1zM195 142h1v1h-1zM196 136h1v1h-1zM196 137h1v1h-1zM196 138h1v1h-1zM196 139h1v1h-1zM196 140h1v1h-1zM196 141h1v1h-1zM197 133h1v1h-1zM197 136h1v1h-1zM197 137h1v1h-1zM197 138h1v1h-1zM197 139h1v1h-1zM197 140h1v1h-1zM197 142h1v1h-1zM198 131h1v1h-1zM198 133h1v1h-1zM198 135h1v1h-1zM198 136h1v1h-1zM198 137h1v1h-1zM198 138h1v1h-1zM198 139h1v1h-1zM198 140h1v1h-1zM199 132h1v1h-1zM199 133h1v1h-1zM199 134h1v1h-1zM199 136h1v1h-1zM199 138h1v1h-1zM199 140h1v1h-1zM200 130h1v1h-1zM200 131h1v1h-1zM200 132h1v1h-1zM200 133h1v1h-1zM200 134h1v1h-1zM200 135h1v1h-1zM200 136h1v1h-1zM201 132h1v1h-1zM201 133h1v1h-1zM201 134h1v1h-1zM202 130h1v1h-1zM202 131h1v1h-1zM202 132h1v1h-1zM202 133h1v1h-1zM202 134h1v1h-1zM202 135h1v1h-1zM203 131h1v1h-1zM203 132h1v1h-1zM203 133h1v1h-1zM204 129h1v1h-1zM204 130h1v1h-1zM204 131h1v1h-1zM204 132h1v1h-1zM204 133h1v1h-1zM204 134h1v1h-1zM204 135h1v1h-1zM205 131h1v1h-1zM205 132h1v1h-1zM205 133h1v1h-1zM206 130h1v1h-1zM206 131h1v1h-1zM206 132h1v1h-1zM206 134h1v1h-1zM207 129h1v1h-1zM207 131h1v1h-1zM207 132h1v1h-1zM207 133h1v1h-1zM208 130h1v1h-1zM208 131h1v1h-1zM208 132h1v1h-1zM209 128h1v1h-1zM209 129h1v1h-1zM209 130h1v1h-1zM209 131h1v1h-1zM209 132h1v1h-1zM209 133h1v1h-1zM209 134h1v1h-1zM210 129h1v1h-1zM210 130h1v1h-1zM210 131h1v1h-1zM210 132h1v1h-1zM211 127h1v1h-1zM211 129h1v1h-1zM211 131h1v1h-1zM211 133h1v1h-1zM212 128h1v1h-1zM212 129h1v1h-1zM212 130h1v1h-1zM212 131h1v1h-1zM213 126h1v1h-1zM213 127h1v1h-1zM213 128h1v1h-1zM213 129h1v1h-1zM213 130h1v1h-1zM213 131h1v1h-1zM213 132h1v1h-1zM214 128h1v1h-1zM214 129h1v1h-1zM214 130h1v1h-1zM215 127h1v1h-1zM215 129h1v1h-1zM215 131h1v1h-1zM216 128h1v1h-1zM216 129h1v1h-1zM216 130h1v1h-1zM217 126h1v1h-1zM217 127h1v1h-1zM217 128h1v1h-1zM217 129h1v1h-1zM217 130h1v1h-1zM217 131h1v1h-1zM217 132h1v1h-1zM218 128h1v1h-1zM218 129h1v1h-1zM218 130h1v1h-1zM219 127h1v1h-1zM219 128h1v1h-1zM219 129h1v1h-1zM219 131h1v1h-1zM220 126h1v1h-1zM220 128h1v1h-1zM220 129h1v1h-1zM220 130h1v1h-1zM221 127h1v1h-1zM221 128h1v1h-1zM221 129h1v1h-1zM222 125h1v1h-1zM222 126h1v1h-1zM222 127h1v1h-1zM222 128h1v1h-1zM222 129h1v1h-1zM222 130h1v1h-1zM222 131h1v1h-1zM223 127h1v1h-1zM223 128h1v1h-1zM223 129h1v1h-1zM224 126h1v1h-1zM224 128h1v1h-1zM224 130h1v1h-1zM225 127h1v1h-1zM225 128h1v1h-1zM225 129h1v1h-1zM226 125h1v1h-1zM226 126h1v1h-1zM226 127h1v1h-1zM226 128h1v1h-1zM226 129h1v1h-1zM226 130h1v1h-1zM226 131h1v1h-1zM227 127h1v1h-1zM227 128h1v1h-1zM227 129h1v1h-1zM228 126h1v1h-1zM228 127h1v1h-1zM228 128h1v1h-1zM228 130h1v1h-1zM229 125h1v1h-1zM229 127h1v1h-1zM229 128h1v1h-1zM229 129h1v1h-1zM230 126h1v1h-1zM230 127h1v1h-1zM230 128h1v1h-1zM231 124h1v1h-1zM231 125h1v1h-1zM231 126h1v1h-1zM231 127h1v1h-1zM231 128h1v1h-1zM231 129h1v1h-1zM231 130h1v1h-1zM232 126h1v1h-1zM232 127h1v1h-1zM232 128h1v1h-1zM233 124h1v1h-1zM233 125h1v1h-1zM233 126h1v1h-1zM233 127h1v1h-1zM233 128h1v1h-1zM233 129h1v1h-1zM234 125h1v1h-1zM234 126h1v1h-1zM234 127h1v1h-1zM235 123h1v1h-1zM235 124h1v1h-1zM235 125h1v1h-1zM235 126h1v1h-1zM235 127h1v1h-1zM235 128h1v1h-1zM235 129h1v1h-1zM236 125h1v1h-1zM236 126h1v1h-1zM236 127h1v1h-1zM237 124h1v1h-1zM237 126h1v1h-1zM237 128h1v1h-1zM238 125h1v1h-1zM238 126h1v1h-1zM238 127h1v1h-1zM239 123h1v1h-1zM239 124h1v1h-1zM239 125h1v1h-1zM239 126h1v1h-1zM239 127h1v1h-1zM239 128h1v1h-1zM239 129h1v1h-1zM240 125h1v1h-1zM240 126h1v1h-1zM240 127h1v1h-1zM241 124h1v1h-1zM241 126h1v1h-1zM241 128h1v1h-1zM242 124h1v1h-1zM242 126h1v1h-1zM242 128h1v1h-1zM243 125h1v1h-1zM243 126h1v1h-1zM243 127h1v1h-1zM244 123h1v1h-1zM244 124h1v1h-1zM244 125h1v1h-1zM244 126h1v1h-1zM244 127h1v1h-1zM244 128h1v1h-1zM244 129h1v1h-1zM245 125h1v1h-1zM245 126h1v1h-1zM245 127h1v1h-1zM246 124h1v1h-1zM246 126h1v1h-1zM246 128h1v1h-1zM247 125h1v1h-1zM247 126h1v1h-1zM247 127h1v1h-1zM248 123h1v1h-1zM248 124h1v1h-1zM248 125h1v1h-1zM248 126h1v1h-1zM248 127h1v1h-1zM248 128h1v1h-1zM248 129h1v1h-1zM249 125h1v1h-1zM249 126h1v1h-1zM249 127h1v1h-1zM250 124h1v1h-1zM250 125h1v1h-1zM250 126h1v1h-1zM250 128h1v1h-1zM251 123h1v1h-1zM251 125h1v1h-1zM251 126h1v1h-1zM251 127h1v1h-1zM252 124h1v1h-1zM252 125h1v1h-1zM252 126h1v1h-1zM253 122h1v1h-1zM253 123h1v1h-1zM253 124h1v1h-1zM253 125h1v1h-1zM253 126h1v1h-1zM253 127h1v1h-1zM253 128h1v1h-1zM254 124h1v1h-1zM254 125h1v1h-1zM254 126h1v1h-1zM255 123h1v1h-1zM255 125h1v1h-1zM255 127h1v1h-1zM256 125h1v1h-1z" fill="#00ff00"/>
<path d="M107 397h1v1h-1zM107 398h1v1h-1zM108 397h1v1h-1zM109 397h1v1h-1zM110 397h1v1h-1zM111 397h1v1h-1zM112 397h1v1h-1zM113 397h1v1h-1zM114 397h1v1h-1zM115 397h1v1h-1zM116 396h1v1h-1zM117 396h1v1h-1zM118 396h1v1h-1zM119 396h1v1h-1zM120 395h1v1h-1zM120 396h1v1h-1zM121 394h1v1h-1zM121 395h1v1h-1zM122 394h1v1h-1zM123 393h1v1h-1zM124 393h1v1h-1zM125 392h1v1h-1zM126 391h1v1h-1zM126 392h1v1h-1zM127 391h1v1h-1zM128 390h1v1h-1zM128 391h1v1h-1zM129 389h1v1h-1zM130 387h1v1h-1zM130 388h1v1h-1zM131 386h1v1h-1zM131 387h1v1h-1zM132 385h1v1h-1zM132 386h1v1h-1zM133 384h1v1h-1zM134 382h1v1h-1zM134 383h1v1h-1zM134 384h1v1h-1zM135 380h1v1h-1zM135 381h1v1h-1zM136 377h1v1h-1zM136 378h1v1h-1zM136 379h1v1h-1zM137 375h1v1h-1zM137 376h1v1h-1zM137 377h1v1h-1zM138 373h1v1h-1zM138 374h1v1h-1zM138 375h1v1h-1zM139 371h1v1h-1zM139 372h1v1h-1zM140 368h1v1h-1zM140 369h1v1h-1zM140 370h1v1h-1zM140 371h1v1h-1zM141 365h1v1h-1zM141 366h1v1h-1zM141 367h1v1h-1zM142 362h1v1h-1zM142 363h1v1h-1zM142 364h1v1h-1zM143 359h1v1h-1zM143 360h1v1h-1zM143 361h1v1h-1zM144 356h1v1h-1zM144 357h1v1h-1zM144 358h1v1h-1zM145 352h1v1h-1zM145 353h1v1h-1zM145 354h1v1h-1zM145 355h1v1h-1zM145 356h1v1h-1zM146 348h1v1h-1zM146 349h1v1h-1zM146 350h1v1h-1zM146 351h1v1h-1zM147 344h1v1h-1zM147 345h1v1h-1zM147 346h1v1h-1zM147 347h1v1h-1zM148 340h1v1h-1zM148 341h1v1h-1zM148 342h1v1h-1zM148 343h1v1h-1zM149 333h1v1h-1zM149 334h1v1h-1zM149 335h1v1h-1zM149 336h1v1h-1zM149 337h1v1h-1zM149 338h1v1h-1zM149 339h1v1h-1zM149 340h1v1h-1zM150 325h1v1h-1zM150 326h1v1h-1zM150 327h1v1h-1zM150 328h1v1h-1zM150 329h1v1h-1zM150 330h1v1h-1zM150 331h1v1h-1zM150 332h1v1h-1zM151 318h1v1h-1zM151 319h1v1h-1zM151 320h1v1h-1zM151 321h1v1h-1zM151 322h1v1h-1zM151 323h1v1h-1zM151 324h1v1h-1zM151 325h1v1h-1zM152 307h1v1h-1zM152 308h1v1h-1zM152 309h1v1h-1zM152 310h1v1h-1zM152 311h1v1h-1zM152 312h1v1h-1zM152 313h1v1h-1zM152 314h1v1h-1zM152 315h1v1h-1zM152 316h1v1h-1zM152 317h1v1h-1zM152 318h1v1h-1zM153 297h1v1h-1zM153 298h1v1h-1zM153 299h1v1h-1zM153 300h1v1h-1zM153 301h1v1h-1zM153 302h1v1h-1zM153 303h1v1h-1zM153 304h1v1h-1zM153 305h1v1h-1zM153 306h1v1h-1zM153 307h1v1h-1zM154 287h1v1h-1zM154 288h1v1h-1zM154 289h1v1h-1zM154 290h1v1h-1zM154 291h1v1h-1zM154 292h1v1h-1zM154 293h1v1h-1zM154 294h1v1h-1zM154 295h1v1h-1zM154 296h1v1h-1zM155 276h1v1h-1zM155 277h1v1h-1zM155 278h1v1h-1zM155 279h1v1h-1zM155 280h1v1h-1zM155 281h1v1h-1zM155 282h1v1h-1zM155 283h1v1h-1zM155 284h1v1h-1zM155 285h1v1h-1zM155 286h1v1h-1zM156 265h1v1h-1zM156 266h1v1h-1zM156 267h1v1h-1zM156 268h1v1h-1zM156 269h1v1h-1zM156 270h1v1h-1zM156 271h1v1h-1zM156 272h1v1h-1zM156 273h1v1h-1zM156 274h1v1h-1zM156 275h1v1h-1zM157 255h1v1h-1zM157 256h1v1h-1zM157 257h1v1h-1zM157 258h1v1h-1zM157 259h1v1h-1zM157 260h1v1h-1zM157 261h1v1h-1zM157 262h1v1h-1zM157 263h1v1h-1zM157 264h1v1h-1zM157 265h1v1h-1zM158 245h1v1h-1zM158 246h1v1h-1zM158 247h1v1h-1zM158 248h1v1h-1zM158 249h1v1h-1zM158 250h1v1h-1zM158 251h1v1h-1zM158 252h1v1h-1zM158 253h1v1h-1zM158 254h1v1h-1zM158 255h1v1h-1zM159 236h1v1h-1zM159 237h1v1h-1zM159 238h1v1h-1zM159 239h1v1h-1zM159 240h1v1h-1zM159 241h1v1h-1zM159 242h1v1h-1zM159 243h1v1h-1zM159 244h1v1h-1zM159 245h1v1h-1zM160 229h1v1h-1zM160 230h1v1h-1zM160 231h1v1h-1zM160 232h1v1h-1zM160 233h1v1h-1zM160 234h1v1h-1zM160 235h1v1h-1zM160 236h1v1h-1zM161 221h1v1h-1zM161 222h1v1h-1zM161 223h1v1h-1zM161 224h1v1h-1zM161 225h1v1h-1zM161 226h1v1h-1zM161 227h1v1h-1zM161 228h1v1h-1zM162 214h1v1h-1zM162 215h1v1h-1zM162 216h1v1h-1zM162 217h1v1h-1zM162 218h1v1h-1zM162 219h1v1h-1zM162 220h1v1h-1zM162 221h1v1h-1zM163 207h1v1h-1zM163 208h1v1h-1zM163 209h1v1h-1zM163 210h1v1h-1zM163 211h1v1h-1zM163 212h1v1h-1zM163 213h1v1h-1zM164 201h1v1h-1zM164 202h1v1h-1zM164 203h1v1h-1zM164 204h1v1h-1zM164 205h1v1h-1zM164 206h1v1h-1zM164 207h1v1h-1zM165 194h1v1h-1zM165 195h1v1h-1zM165 196h1v1h-1zM165 197h1v1h-1zM165 198h1v1h-1zM165 199h1v1h-1zM165 200h1v1h-1zM166 188h1v1h-1zM166 189h1v1h-1zM166 190h1v1h-1zM166 191h1v1h-1zM166 192h1v1h-1zM166 193h1v1h-1zM166 194h1v1h-1zM167 183h1v1h-1zM167 184h1v1h-1zM167 185h1v1h-1zM167 186h1v1h-1zM167 187h1v1h-1zM167 188h1v1h-1zM168 177h1v1h-1zM168 178h1v1h-1zM168 179h1v1h-1zM168 180h1v1h-1zM168 181h1v1h-1zM168 182h1v1h-1zM169 172h1v1h-1zM169 173h1v1h-1zM169 174h1v1h-1zM169 175h1v1h-1zM169 176h1v1h-1zM169 177h1v1h-1zM170 168h1v1h-1zM170 169h1v1h-1zM170 170h1v1h-1zM170 171h1v1h-1zM170 172h1v1h-1zM171 164h1v1h-1zM171 165h1v1h-1zM171 166h1v1h-1zM171 167h1v1h-1zM172 160h1v1h-1zM172 161h1v1h-1zM172 162h1v1h-1zM172 163h1v1h-1zM173 158h1v1h-1zM173 159h1v1h-1zM173 160h1v1h-1zM174 156h1v1h-1zM174 157h1v1h-1zM175 154h1v1h-1zM175 155h1v1h-1zM176 152h1v1h-1zM176 153h1v1h-1zM177 150h1v1h-1zM177 151h1v1h-1zM177 152h1v1h-1zM178 148h1v1h-1zM178 149h1v1h-1zM178 150h1v1h-1zM179 146h1v1h-1zM179 147h1v1h-1zM179 148h1v1h-1zM180 144h1v1h-1zM180 145h1v1h-1zM180 146h1v1h-1zM181 143h1v1h-1zM181 144h1v1h-1zM182 142h1v1h-1zM182 143h1v1h-1zM183 141h1v1h-1zM184 140h1v1h-1zM185 139h1v1h-1zM185 140h1v1h-1zM186 138h1v1h-1zM186 139h1v1h-1zM187 137h1v1h-1zM187 138h1v1h-1zM188 137h1v1h-1zM189 136h1v1h-1zM190 136h1v1h-1zM191 135h1v1h-1zM191 136h1v1h-1zM192 135h1v1h-1zM193 134h1v1h-1zM193 135h1v1h-1zM194 134h1v1h-1zM195 134h1v1h-1zM196 133h1v1h-1zM196 134h1v1h-1zM197 133h1v1h-1zM198 133h1v1h-1zM199 133h1v1h-1zM200 133h1v1h-1zM201 132h1v1h-1zM201 133h1v1h-1zM202 132h1v1h-1zM203 132h1v1h-1zM204 132h1v1h-1zM205 132h1v1h-1zM206 132h1v1h-1zM207 132h1v1h-1zM208 132h1v1h-1zM209 132h1v1h-1zM210 132h1v1h-1zM211 132h1v1h-1zM212 132h1v1h-1zM213 132h1v1h-1zM214 132h1v1h-1zM215 132h1v1h-1zM216 132h1v1h-1zM217 132h1v1h-1zM218 132h1v1h-1zM219 132h1v1h-1zM220 132h1v1h-1zM221 132h1v1h-1zM222 132h1v1h-1zM223 132h1v1h-1zM224 132h1v1h-1zM225 132h1v1h-1zM226 132h1v1h-1zM227 132h1v1h-1zM228 132h1v1h-1zM229 132h1v1h-1zM230 132h1v1h-1zM231 132h1v1h-1zM232 132h1v1h-1zM233 132h1v1h-1zM234 132h1v1h-1zM235 132h1v1h-1zM236 132h1v1h-1zM237 132h1v1h-1zM238 132h1v1h-1zM239 132h1v1h-1zM240 132h1v1h-1zM241 132h1v1h-1zM242 132h1v1h-1zM243 132h1v1h-1zM244 132h1v1h-1zM245 132h1v1h-1zM246 132h1v1h-1zM247 132h1v1h-1zM248 132h1v1h-1zM249 132h1v1h-1zM250 132h1v1h-1zM251 132h1v1h-1zM252 132h1v1h-1zM253 132h1v1h-1zM254 132h1v1h-1zM255 132h1v1h-1zM256 132h1v1h-1zM257 132h1v1h-1zM258 132h1v1h-1zM259 132h1v1h-1zM260 132h1v1h-1zM261 132h1v1h-1zM262 132h1v1h-1zM263 132h1v1h-1zM264 132h1v1h-1zM265 132h1v1h-1zM266 132h1v1h-1zM267 132h1v1h-1zM268 132h1v1h-1zM269 132h1v1h-1zM270 132h1v1h-1zM271 132h1v1h-1zM272 132h1v1h-1zM273 132h1v1h-1zM274 132h1v1h-1zM275 132h1v1h-1zM276 132h1v1h-1zM277 132h1v1h-1zM278 132h1v1h-1zM279 132h1v1h-1zM280 132h1v1h-1zM281 132h1v1h-1zM282 132h1v1h-1zM283 132h1v1h-1zM284 132h1v1h-1zM285 132h1v1h-1zM286 132h1v1h-1zM287 132h1v1h-1zM288 132h1v1h-1zM289 132h1v1h-1zM290 132h1v1h-1zM291 132h1v1h-1zM292 132h1v1h-1zM293 132h1v1h-1zM294 132h1v1h-1zM295 132h1v1h-1zM296 132h1v1h-1zM297 132h1v1h-1zM298 132h1v1h-1zM299 132h1v1h-1zM300 132h1v1h-1zM301 132h1v1h-1zM302 132h1v1h-1zM303 132h1v1h-1zM304 132h1v1h-1zM305 132h1v1h-1zM306 132h1v1h-1zM307 132h1v1h-1zM308 132h1v1h-1zM309 132h1v1h-1zM310 132h1v1h-1zM311 132h1v1h-1zM312 132h1v1h-1zM313 132h1v1h-1zM314 132h1v1h-1zM315 132h1v1h-1zM316 132h1v1h-1zM317 132h1v1h-1zM318 132h1v1h-1zM319 132h1v1h-1zM320 132h1v1h-1zM321 132h1v1h-1zM322 132h1v1h-1zM323 132h1v1h-1zM324 132h1v1h-1zM325 132h1v1h-1zM326 132h1v1h-1zM327 132h1v1h-1zM328 132h1v1h-1zM329 132h1v1h-1zM330 132h1v1h-1zM331 132h1v1h-1zM332 132h1v1h-1zM333 132h1v1h-1zM334 132h1v1h-1zM335 132h1v1h-1zM336 132h1v1h-1zM337 132h1v1h-1zM338 132h1v1h-1zM339 132h1v1h-1zM340 132h1v1h-1zM341 132h1v1h-1zM342 132h1v1h-1zM343 132h1v1h-1zM344 132h1v1h-1zM345 132h1v1h-1zM346 132h1v1h-1zM347 132h1v1h-1zM348 132h1v1h-1zM349 132h1v1h-1zM350 132h1v1h-1zM351 132h1v1h-1zM352 132h1v1h-1zM353 132h1v1h-1zM354 132h1v1h-1zM355 132h1v1h-1zM356 132h1v1h-1zM357 132h1v1h-1zM358 132h1v1h-1zM359 132h1v1h-1zM360 132h1v1h-1zM361 132h1v1h-1zM362 132h1v1h-1zM363 132h1v1h-1zM364 132h1v1h-1zM365 132h1v1h-1zM366 132h1v1h-1zM367 132h1v1h-1zM368 132h1v1h-1zM369 132h1v1h-1zM370 132h1v1h-1zM371 132h1v1h-1zM372 132h1v1h-1zM373 132h1v1h-1zM374 132h1v1h-1zM375 132h1v1h-1zM376 132h1v1h-1zM377 132h1v1h-1zM378 132h1v1h-1zM379 132h1v1h-1zM380 132h1v1h-1zM381 132h1v1h-1zM382 132h1v1h-1zM383 132h1v1h-1zM384 132h1v1h-1zM385 132h1v1h-1zM386 132h1v1h-1zM387 132h1v1h-1zM388 132h1v1h-1zM389 132h1v1h-1zM390 132h1v1h-1zM391 132h1v1h-1zM392 132h1v1h-1zM393 132h1v1h-1zM394 132h1v1h-1zM395 132h1v1h-1zM396 132h1v1h-1zM397 132h1v1h-1zM398 132h1v1h-1zM399 132h1v1h-1zM400 132h1v1h-1zM401 132h1v1h-1zM402 132h1v1h-1zM403 132h1v1h-1zM404 132h1v1h-1zM405 132h1v1h-1zM406 132h1v1h-1zM407 132h1v1h-1zM408 132h1v1h-1zM409 132h1v1h-1zM410 132h1v1h-1zM411 132h1v1h-1zM412 132h1v1h-1zM413 132h1v1h-1zM414 132h1v1h-1zM415 132h1v1h-1zM416 132h1v1h-1zM417 132h1v1h-1zM418 132h1v1h-1zM419 132h1v1h-1zM420 132h1v1h-1zM421 132h1v1h-1zM422 132h1v1h-1zM423 132h1v1h-1zM424 132h1v1h-1zM425 132h1v1h-1zM426 132h1v1h-1zM427 132h1v1h-1zM428 132h1v1h-1zM429 132h1v1h-1zM430 132h1v1h-1zM431 132h1v1h-1zM432 132h1v1h-1zM433 132h1v1h-1zM434 132h1v1h-1zM435 132h1v1h-1zM436 132h1v1h-1zM437 132h1v1h-1zM438 132h1v1h-1zM439 132h1v1h-1zM440 132h1v1h-1zM441 132h1v1h-1zM442 132h1v1h-1zM443 132h1v1h-1zM444 132h1v1h-1zM445 132h1v1h-1zM446 132h1v1h-1zM447 132h1v1h-1zM448 132h1v1h-1zM449 132h1v1h-1zM450 132h1v1h-1zM451 132h1v1h-1zM452 132h1v1h-1zM453 132h1v1h-1zM454 132h1v1h-1zM455 132h1v1h-1zM456 132h1v1h-1zM457 132h1v1h-1zM458 132h1v1h-1zM459 132h1v1h-1zM460 132h1v1h-1zM461 132h1v1h-1zM462 132h1v1h-1zM463 132h1v1h-1zM464 132h1v1h-1zM465 132h1v1h-1zM466 132h1v1h-1zM467 132h1v1h-1zM468 132h1v1h-1zM469 132h1v1h-1zM470 132h1v1h-1zM471 132h1v1h-1zM472 132h1v1h-1zM473 132h1v1h-1zM474 132h1v1h-1zM475 132h1v1h-1zM476 132h1v1h-1zM477 132h1v1h-1zM478 132h1v1h-1zM479 132h1v1h-1zM480 132h1v1h-1zM481 132h1v1h-1zM482 132h1v1h-1zM483 132h1v1h-1zM484 132h1v1h-1zM485 132h1v1h-1zM486 132h1v1h-1zM487 132h1v1h-1zM488 132h1v1h-1zM489 132h1v1h-1zM490 132h1v1h-1zM491 132h1v1h-1zM492 132h1v1h-1zM493 132h1v1h-1zM494 132h1v1h-1zM495 132h1v1h-1zM496 132h1v1h-1zM497 132h1v1h-1zM498 132h1v1h-1zM499 132h1v1h-1zM500 132h1v1h-1zM501 132h1v1h-1zM502 132h1v1h-1zM503 132h1v1h-1zM504 132h1v1h-1zM505 132h1v1h-1zM506 132h1v1h-1zM507 132h1v1h-1zM508 132h1v1h-1zM509 132h1v1h-1zM510 132h1v1h-1zM511 132h1v1h-1zM512 132h1v1h-1zM513 132h1v1h-1zM514 132h1v1h-1zM515 132h1v1h-1zM516 132h1v1h-1zM517 132h1v1h-1zM518 132h1v1h-1zM519 132h1v1h-1zM520 132h1v1h-1zM521 132h1v1h-1zM522 132h1v1h-1zM523 132h1v1h-1zM524 132h1v1h-1zM525 132h1v1h-1zM526 132h1v1h-1zM527 132h1v1h-1zM528 132h1v1h-1zM529 132h1v1h-1zM530 132h1v1h-1zM531 132h1v1h-1zM532 132h1v1h-1zM533 132h1v1h-1zM534 132h1v1h-1zM535 132h1v1h-1zM536 132h1v1h-1zM537 132h1v1h-1zM538 132h1v1h-1zM539 132h1v1h-1zM540 132h1v1h-1zM541 132h1v1h-1zM542 132h1v1h-1zM543 132h1v1h-1zM544 132h1v1h-1zM545 132h1v1h-1zM546 132h1v1h-1zM547 132h1v1h-1zM548 132h1v1h-1zM549 132h1v1h-1zM550 132h1v1h-1zM551 132h1v1h-1zM552 132h1v1h-1zM553 132h1v1h-1zM554 132h1v1h-1zM555 132h1v1h-1zM556 132h1v1h-1zM557 132h1v1h-1zM558 132h1v1h-1zM559 132h1v1h-1zM560 132h1v1h-1zM561 132h1v1h-1zM562 132h1v1h-1zM563 132h1v1h-1zM564 132h1v1h-1zM565 132h1v1h-1zM566 132h1v1h-1zM567 132h1v1h-1zM568 132h1v1h-1zM569 132h1v1h-1zM570 132h1v1h-1zM571 132h1v1h-1zM572 132h1v1h-1zM573 132h1v1h-1zM574 132h1v1h-1zM575 132h1v1h-1zM576 132h1v1h-1zM577 132h1v1h-1zM578 132h1v1h-1zM579 132h1v1h-1zM580 132h1v1h-1zM581 132h1v1h-1zM582 132h1v1h-1zM583 132h1v1h-1zM584 132h1v1h-1zM585 132h1v1h-1zM586 132h1v1h-1zM587 132h1v1h-1zM588 132h1v1h-1zM589 132h1v1h-1zM590 132h1v1h-1zM591 132h1v1h-1zM592 132h1v1h-1zM593 132h1v1h-1zM594 132h1v1h-1zM595 132h1v1h-1zM596 132h1v1h-1zM597 132h1v1h-1zM598 132h1v1h-1zM599 132h1v1h-1zM600 132h1v1h-1zM601 132h1v1h-1zM602 132h1v1h-1zM603 132h1v1h-1zM604 132h1v1h-1zM605 132h1v1h-1zM606 132h1v1h-1zM607 132h1v1h-1zM608 132h1v1h-1zM609 132h1v1h-1zM610 132h1v1h-1zM611 132h1v1h-1zM612 132h1v1h-1zM613 132h1v1h-1zM614 132h1v1h-1zM615 132h1v1h-1zM616 132h1v1h-1z" fill="#0000ff"/>
<path d="M95 397h1v1h-1zM98 397h1v1h-1zM100 397h1v1h-1zM103 397h1v1h-1zM106 397h1v1h-1zM108 397h1v1h-1zM111 397h1v1h-1zM114 397h1v1h-1zM116 397h1v1h-1zM119 397h1v1h-1zM122 397h1v1h-1zM124 397h1v1h-1zM127 397h1v1h-1zM130 397h1v1h-1zM132 397h1v1h-1zM135 397h1v1h-1zM138 397h1v1h-1zM140 397h1v1h-1zM143 397h1v1h-1zM146 397h1v1h-1zM148 397h1v1h-1zM151 397h1v1h-1zM154 397h1v1h-1zM156 397h1v1h-1zM159 397h1v1h-1zM162 397h1v1h-1zM164 397h1v1h-1zM167 397h1v1h-1zM170 397h1v1h-1zM172 397h1v1h-1zM175 397h1v1h-1zM178 397h1v1h-1zM180 397h1v1h-1zM183 397h1v1h-1zM186 397h1v1h-1zM188 397h1v1h-1zM191 397h1v1h-1zM194 397h1v1h-1zM196 397h1v1h-1zM199 397h1v1h-1zM202 397h1v1h-1zM204 397h1v1h-1zM207 397h1v1h-1zM210 397h1v1h-1zM212 397h1v1h-1zM215 397h1v1h-1zM218 397h1v1h-1zM220 397h1v1h-1zM223 397h1v1h-1zM226 397h1v1h-1zM228 397h1v1h-1zM231 397h1v1h-1zM234 397h1v1h-1zM236 397h1v1h-1zM239 397h1v1h-1zM242 397h1v1h-1zM244 397h1v1h-1zM247 397h1v1h-1zM250 397h1v1h-1zM252 397h1v1h-1zM255 397h1v1h-1zM258 397h1v1h-1zM260 397h1v1h-1zM263 397h1v1h-1zM266 397h1v1h-1zM268 397h1v1h-1zM271 397h1v1h-1zM274 397h1v1h-1zM276 397h1v1h-1zM279 397h1v1h-1zM282 397h1v1h-1zM284 397h1v1h-1zM287 397h1v1h-1zM290 397h1v1h-1zM292 397h1v1h-1zM295 397h1v1h-1zM298 397h1v1h-1zM300 397h1v1h-1zM303 397h1v1h-1zM306 397h1v1h-1zM308 397h1v1h-1zM311 397h1v1h-1zM314 397h1v1h-1zM316 397h1v1h-1zM319 397h1v1h-1zM322 397h1v1h-1zM324 397h1v1h-1zM327 397h1v1h-1zM330 397h1v1h-1zM332 397h1v1h-1zM335 397h1v1h-1zM338 397h1v1h-1zM340 397h1v1h-1zM343 397h1v1h-1zM346 397h1v1h-1zM348 397h1v1h-1zM351 397h1v1h-1zM354 397h1v1h-1zM356 397h1v1h-1zM359 397h1v1h-1zM362 397h1v1h-1zM364 397h1v1h-1zM367 397h1v1h-1zM370 397h1v1h-1zM372 397h1v1h-1zM375 397h1v1h-1zM378 397h1v1h-1zM380 397h1v1h-1zM383 397h1v1h-1zM386 397h1v1h-1zM388 397h1v1h-1zM391 397h1v1h-1zM394 397h1v1h-1zM396 397h1v1h-1zM399 397h1v1h-1zM402 397h1v1h-1zM404 397h1v1h-1zM407 397h1v1h-1zM410 397h1v1h-1zM412 397h1v1h-1zM415 397h1v1h-1zM418 397h1v1h-1zM420 397h1v1h-1zM423 397h1v1h-1zM426 397h1v1h-1zM428 397h1v1h-1zM431 397h1v1h-1zM434 397h1v1h-1zM436 397h1v1h-1zM439 397h1v1h-1zM442 397h1v1h-1zM444 397h1v1h-1zM447 397h1v1h-1zM450 397h1v1h-1zM452 397h1v1h-1zM455 397h1v1h-1zM458 397h1v1h-1zM460 397h1v1h-1zM463 397h1v1h-1zM466 397h1v1h-1zM468 397h1v1h-1zM471 397h1v1h-1zM474 397h1v1h-1zM476 397h1v1h-1zM479 397h1v1h-1zM482 397h1v1h-1zM484 397h1v1h-1zM487 397h1v1h-1zM490 397h1v1h-1zM492 397h1v1h-1zM495 397h1v1h-1z" fill="#ff00ff"/>
<path d="M495 398h7v1h-7zM498 395h1v7h-1z" fill="#ff00ff"/>
</svg>
<div class="nm" style="left:40px;width:50px;top:430px;transform:scaleY(1.14)">&#8722;20</div>
<div class="nm" style="left:40px;width:50px;top:393px;transform:scaleY(1.14)">0</div>
<div class="nm" style="left:40px;width:50px;top:357px;transform:scaleY(1.14)">20</div>
<div class="nm" style="left:40px;width:50px;top:321px;transform:scaleY(1.14)">40</div>
<div class="nm" style="left:40px;width:50px;top:285px;transform:scaleY(1.14)">60</div>
<div class="nm" style="left:40px;width:50px;top:249px;transform:scaleY(1.14)">80</div>
<div class="nm" style="left:40px;width:50px;top:213px;transform:scaleY(1.14)">100</div>
<div class="nm" style="left:40px;width:50px;top:177px;transform:scaleY(1.14)">120</div>
<div class="nm" style="left:40px;width:50px;top:141px;transform:scaleY(1.14)">140</div>
<div class="nm" style="left:40px;width:50px;top:105px;transform:scaleY(1.14)">160</div>
<div class="nm" style="left:73.5px;width:40px;text-align:center;top:440.5px;transform:scaleY(1.14)">0</div>
<div class="nm" style="left:125.5px;width:40px;text-align:center;top:440.5px;transform:scaleY(1.14)">20</div>
<div class="nm" style="left:177.5px;width:40px;text-align:center;top:440.5px;transform:scaleY(1.14)">40</div>
<div class="nm" style="left:229.5px;width:40px;text-align:center;top:440.5px;transform:scaleY(1.14)">60</div>
<div class="nm" style="left:281.5px;width:40px;text-align:center;top:440.5px;transform:scaleY(1.14)">80</div>
<div class="nm" style="left:334.5px;width:40px;text-align:center;top:440.5px;transform:scaleY(1.14)">100</div>
<div class="nm" style="left:386.5px;width:40px;text-align:center;top:440.5px;transform:scaleY(1.14)">120</div>
<div class="nm" style="left:438.5px;width:40px;text-align:center;top:440.5px;transform:scaleY(1.14)">140</div>
<div class="nm" style="left:490.5px;width:40px;text-align:center;top:440.5px;transform:scaleY(1.14)">160</div>
<div class="nm" style="left:542.5px;width:40px;text-align:center;top:440.5px;transform:scaleY(1.14)">180</div>
<div class="nm" style="left:595.5px;width:40px;text-align:center;top:440.5px;transform:scaleY(1.14)">200</div>
<div class="tk" style="left:338.5px;top:457px;transform:scaleY(1.3)">Hours</div>
<div class="tk" style="left:170.5px;top:89px;transform:scaleY(1.3)">Scan6<span style="position:relative;top:4px">p</span>late1-Spot#1 Filtered Red Including 2Deriv Blue</div>
<div class="tk" style="left:55.5px;top:364.4px;transform:rotate(-90deg) scaleY(1.15);white-space:pre;">Intensity   Normalized    f</div>
<div class="ed" style="left:40px;top:184px;height:20px">15</div>
<div class="lab" style="left:124px;top:184px;height:20px">BG Threshold</div>
<div class="ed" style="left:40px;top:212px;height:20px">38</div>
<div class="lab" style="left:124px;top:212px;height:20px"><span style="letter-spacing:-0.3px">SpotDetThres(1&#8211;60%)</span></div>
<div class="ed" style="left:40px;top:240px;height:20px">14</div>
<div class="lab" style="left:124px;top:240px;height:20px">Radius</div>
<div class="ed" style="left:40px;top:268px;height:19px">1</div>
<div class="lab" style="left:124px;top:268px;height:19px">Dither</div>
<div class="ed" style="left:40px;top:295px;height:20px">10</div>
<div class="lab" style="left:124px;top:295px;height:20px">SearchRange</div>
<svg class="abs" style="left:0;top:0" width="300" height="210"><path d="M134 202h1v2h-1zM137 202h1v1h-1zM138 201h3v1h-3zM141 202h1v1h-1zM143 202h1v2h-1zM154 201h1v3h-1zM184 202h1v2h-1zM192 202h6v1h-6zM197 203h1v1h-1zM233 202h1v1h-1z" fill="#201030"/></svg>
<div class="abs" style="left:40px;top:351px;width:67px;height:23px;box-sizing:border-box;border-top:1px solid #8c8c8c;border-bottom:1px solid #fafafa;"></div><div class="abs" style="left:40px;top:352px;width:66px;height:21px;box-sizing:border-box;border:1px solid;border-color:#fafafa #8a8a8a #707070 #fafafa;background:linear-gradient(#dadada,#a8a8a8);"></div>
<div class="abs" style="left:43px;top:354px;font-size:14px;color:#1a0a30;white-space:nowrap">Growt...</div>
<svg class="abs" style="left:94px;top:359px" width="10" height="6"><path d="M0.5 0.5H9.5L5 5.5Z" fill="#000"/></svg>
<div class="abs" style="left:41px;top:379px;width:66px;height:20px;box-sizing:border-box;border:1px solid;border-color:#e8e8e8 #6a6a6a #6a6a6a #e8e8e8;background:linear-gradient(#d8d8d8,#acacac);"></div>
<div class="abs" style="left:45px;top:380.5px;font-size:14.5px;color:#1a0a30;white-space:nowrap">Continue</div>

<div class="abs" style="left:478px;top:80px;width:66px;height:238px;box-sizing:border-box;border:1px solid #8c8c8c;background:#316ac5;overflow:hidden"><div class="abs" style="left:0;top:0;width:49px;height:15px;box-sizing:border-box;border:1px solid #f0a028;background:#b4b4b4;color:#1a0a30;font-size:14px;line-height:13px;padding-left:1px">1</div><div class="abs" style="left:1px;top:16.0px;color:#fff;font-size:14px;line-height:15px">10</div><div class="abs" style="left:1px;top:31.0px;color:#fff;font-size:14px;line-height:15px">11</div><div class="abs" style="left:1px;top:46.0px;color:#fff;font-size:14px;line-height:15px">12</div><div class="abs" style="left:1px;top:61.0px;color:#fff;font-size:14px;line-height:15px">13</div><div class="abs" style="left:1px;top:76.0px;color:#fff;font-size:14px;line-height:15px">14</div><div class="abs" style="left:1px;top:91.0px;color:#fff;font-size:14px;line-height:15px">15</div><div class="abs" style="left:1px;top:106.0px;color:#fff;font-size:14px;line-height:15px">16</div><div class="abs" style="left:1px;top:121.0px;color:#fff;font-size:14px;line-height:15px">17</div><div class="abs" style="left:1px;top:136.0px;color:#fff;font-size:14px;line-height:15px">18</div><div class="abs" style="left:1px;top:151.0px;color:#fff;font-size:14px;line-height:15px">19</div><div class="abs" style="left:1px;top:166.0px;color:#fff;font-size:14px;line-height:15px">2</div><div class="abs" style="left:1px;top:181.0px;color:#fff;font-size:14px;line-height:15px">20</div><div class="abs" style="left:1px;top:196.0px;color:#fff;font-size:14px;line-height:15px">21</div><div class="abs" style="left:1px;top:211.0px;color:#fff;font-size:14px;line-height:15px">22</div><div class="abs" style="left:1px;top:226.0px;color:#fff;font-size:14px;line-height:15px">23</div></div>
<svg class="abs" style="left:528px;top:81px" width="15" height="236">
<defs><linearGradient id="gth" x1="0" y1="0" x2="1" y2="0"><stop offset="0" stop-color="#d4e0f4"/><stop offset="1" stop-color="#b0c2e2"/></linearGradient>
<linearGradient id="gbt" x1="0" y1="0" x2="1" y2="1"><stop offset="0" stop-color="#f4f2e8"/><stop offset="1" stop-color="#e0dcc8"/></linearGradient></defs>
<rect x="0" y="0" width="15" height="236" fill="#ece9d8"/>
<rect x="0" y="144" width="1" height="76" fill="#b8b6a8"/>
<rect x="0" y="0" width="1" height="15" fill="#fff"/>
<rect x="1" y="0" width="14" height="15" fill="url(#gbt)"/>
<rect x="1" y="0" width="14" height="1" fill="#fff"/>
<rect x="1" y="0" width="1" height="15" fill="#fff"/>
<rect x="14" y="0" width="1" height="15" fill="#cac6b4"/>
<path d="M4 9 H12.5 L8.25 4.8 Z" fill="#000"/>
<rect x="0" y="15" width="15" height="1" fill="#3a6ad0"/>
<rect x="1" y="16" width="14" height="127" fill="url(#gth)"/>
<rect x="0" y="16" width="2" height="127" fill="#fff"/>
<rect x="0" y="143" width="15" height="1" fill="#3c6cd0"/>
<g fill="#7c98d4"><rect x="4" y="68" width="1" height="1"/><rect x="6" y="68" width="1" height="1"/><rect x="8" y="68" width="1" height="1"/><rect x="10" y="68" width="1" height="1"/><rect x="12" y="68" width="1" height="1"/><rect x="3" y="69" width="1" height="1"/><rect x="5" y="69" width="1" height="1"/><rect x="7" y="69" width="1" height="1"/><rect x="9" y="69" width="1" height="1"/><rect x="11" y="69" width="1" height="1"/><rect x="13" y="69" width="1" height="1"/><rect x="4" y="70" width="1" height="1"/><rect x="6" y="70" width="1" height="1"/><rect x="8" y="70" width="1" height="1"/><rect x="10" y="70" width="1" height="1"/><rect x="12" y="70" width="1" height="1"/><rect x="3" y="71" width="1" height="1"/><rect x="5" y="71" width="1" height="1"/><rect x="7" y="71" width="1" height="1"/><rect x="9" y="71" width="1" height="1"/><rect x="11" y="71" width="1" height="1"/><rect x="13" y="71" width="1" height="1"/><rect x="4" y="72" width="1" height="1"/><rect x="6" y="72" width="1" height="1"/><rect x="8" y="72" width="1" height="1"/><rect x="10" y="72" width="1" height="1"/><rect x="12" y="72" width="1" height="1"/><rect x="3" y="73" width="1" height="1"/><rect x="5" y="73" width="1" height="1"/><rect x="7" y="73" width="1" height="1"/><rect x="9" y="73" width="1" height="1"/><rect x="11" y="73" width="1" height="1"/><rect x="13" y="73" width="1" height="1"/><rect x="4" y="74" width="1" height="1"/><rect x="6" y="74" width="1" height="1"/><rect x="8" y="74" width="1" height="1"/><rect x="10" y="74" width="1" height="1"/><rect x="12" y="74" width="1" height="1"/><rect x="3" y="75" width="1" height="1"/><rect x="5" y="75" width="1" height="1"/><rect x="7" y="75" width="1" height="1"/><rect x="9" y="75" width="1" height="1"/><rect x="11" y="75" width="1" height="1"/><rect x="13" y="75" width="1" height="1"/><rect x="4" y="76" width="1" height="1"/><rect x="6" y="76" width="1" height="1"/><rect x="8" y="76" width="1" height="1"/><rect x="10" y="76" width="1" height="1"/><rect x="12" y="76" width="1" height="1"/><rect x="3" y="77" width="1" height="1"/><rect x="5" y="77" width="1" height="1"/><rect x="7" y="77" width="1" height="1"/><rect x="9" y="77" width="1" height="1"/><rect x="11" y="77" width="1" height="1"/><rect x="13" y="77" width="1" height="1"/><rect x="4" y="78" width="1" height="1"/><rect x="6" y="78" width="1" height="1"/><rect x="8" y="78" width="1" height="1"/><rect x="10" y="78" width="1" height="1"/><rect x="12" y="78" width="1" height="1"/><rect x="3" y="79" width="1" height="1"/><rect x="5" y="79" width="1" height="1"/><rect x="7" y="79" width="1" height="1"/><rect x="9" y="79" width="1" height="1"/><rect x="11" y="79" width="1" height="1"/><rect x="13" y="79" width="1" height="1"/><rect x="4" y="80" width="1" height="1"/><rect x="6" y="80" width="1" height="1"/><rect x="8" y="80" width="1" height="1"/><rect x="10" y="80" width="1" height="1"/><rect x="12" y="80" width="1" height="1"/><rect x="3" y="81" width="1" height="1"/><rect x="5" y="81" width="1" height="1"/><rect x="7" y="81" width="1" height="1"/><rect x="9" y="81" width="1" height="1"/><rect x="11" y="81" width="1" height="1"/><rect x="13" y="81" width="1" height="1"/><rect x="4" y="82" width="1" height="1"/><rect x="6" y="82" width="1" height="1"/><rect x="8" y="82" width="1" height="1"/><rect x="10" y="82" width="1" height="1"/><rect x="12" y="82" width="1" height="1"/><rect x="3" y="83" width="1" height="1"/><rect x="5" y="83" width="1" height="1"/><rect x="7" y="83" width="1" height="1"/><rect x="9" y="83" width="1" height="1"/><rect x="11" y="83" width="1" height="1"/><rect x="13" y="83" width="1" height="1"/><rect x="4" y="84" width="1" height="1"/><rect x="6" y="84" width="1" height="1"/><rect x="8" y="84" width="1" height="1"/><rect x="10" y="84" width="1" height="1"/><rect x="12" y="84" width="1" height="1"/><rect x="3" y="85" width="1" height="1"/><rect x="5" y="85" width="1" height="1"/><rect x="7" y="85" width="1" height="1"/><rect x="9" y="85" width="1" height="1"/><rect x="11" y="85" width="1" height="1"/><rect x="13" y="85" width="1" height="1"/><rect x="4" y="86" width="1" height="1"/><rect x="6" y="86" width="1" height="1"/><rect x="8" y="86" width="1" height="1"/><rect x="10" y="86" width="1" height="1"/><rect x="12" y="86" width="1" height="1"/><rect x="3" y="87" width="1" height="1"/><rect x="5" y="87" width="1" height="1"/><rect x="7" y="87" width="1" height="1"/><rect x="9" y="87" width="1" height="1"/><rect x="11" y="87" width="1" height="1"/><rect x="13" y="87" width="1" height="1"/><rect x="4" y="88" width="1" height="1"/><rect x="6" y="88" width="1" height="1"/><rect x="8" y="88" width="1" height="1"/><rect x="10" y="88" width="1" height="1"/><rect x="12" y="88" width="1" height="1"/><rect x="3" y="89" width="1" height="1"/><rect x="5" y="89" width="1" height="1"/><rect x="7" y="89" width="1" height="1"/><rect x="9" y="89" width="1" height="1"/><rect x="11" y="89" width="1" height="1"/><rect x="13" y="89" width="1" height="1"/><rect x="4" y="90" width="1" height="1"/><rect x="6" y="90" width="1" height="1"/><rect x="8" y="90" width="1" height="1"/><rect x="10" y="90" width="1" height="1"/><rect x="12" y="90" width="1" height="1"/><rect x="3" y="91" width="1" height="1"/><rect x="5" y="91" width="1" height="1"/><rect x="7" y="91" width="1" height="1"/><rect x="9" y="91" width="1" height="1"/><rect x="11" y="91" width="1" height="1"/><rect x="13" y="91" width="1" height="1"/></g>
<rect x="0" y="220" width="15" height="1" fill="#a8a8a8"/>
<rect x="0" y="221" width="15" height="15" fill="url(#gbt)"/>
<rect x="1" y="221" width="14" height="1" fill="#fff"/>
<rect x="1" y="221" width="1" height="15" fill="#fff"/>
<rect x="14" y="221" width="1" height="15" fill="#cac6b4"/>
<path d="M4 226 H12.5 L8.25 230.2 Z" fill="#000"/>
</svg>
<svg class="abs" style="left:420px;top:148px" width="24" height="28"><path d="M7.5 6 V22.5 L11 19.3 L14 24.5 L16.8 23 L13.8 17.8 L18.5 17.5 Z" fill="#fff" stroke="#000" stroke-width="1.3" stroke-linejoin="miter"/></svg>
</body></html>
